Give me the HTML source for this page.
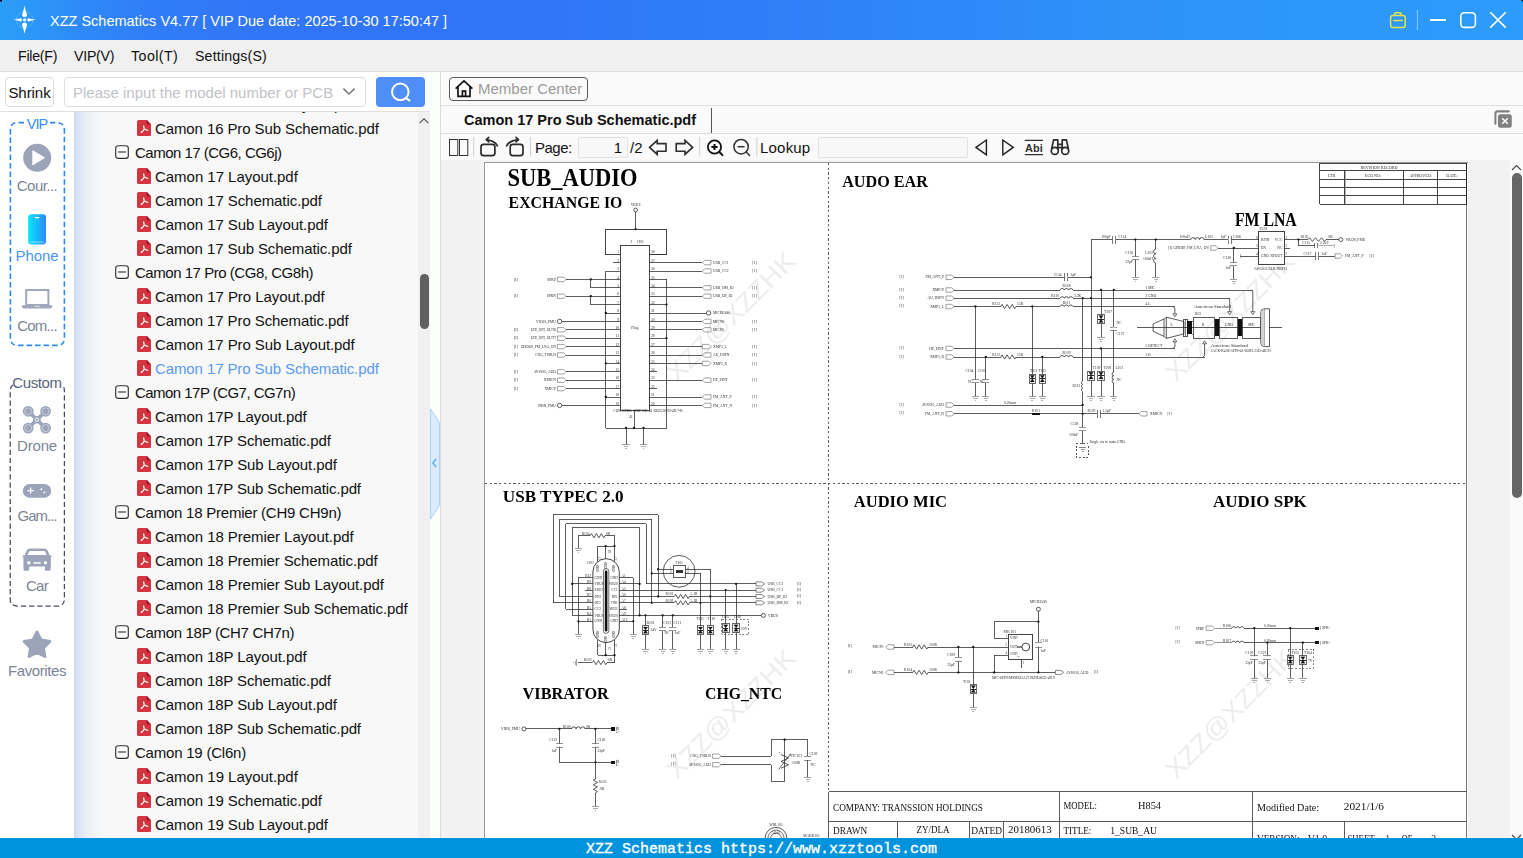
<!DOCTYPE html>
<html lang="en">
<head>
<meta charset="utf-8">
<title>XZZ Schematics V4.77</title>
<style>
*{box-sizing:border-box;margin:0;padding:0}
html,body{width:1523px;height:858px;overflow:hidden;background:#fafafa;font-family:"Liberation Sans","Noto Sans CJK SC",sans-serif;color:#111}
.abs{position:absolute}
#app{position:relative;width:1523px;height:858px;overflow:hidden;background:#fafafa}
/* title bar */
#titlebar{left:0;top:0;width:1523px;height:40px;background:linear-gradient(90deg,#2a9ef8 0px,#2b98f8 30px,#2e89f8 85px,#307df7 150px,#3176f7 250px,#3074f7 480px,#2f80f8 800px,#2d93f9 1150px,#2c9cfa 1523px)}
#titlebar .ttl{left:50px;top:1px;height:40px;line-height:40px;color:#fff;font-size:14.5px;white-space:nowrap}
/* menubar */
#menubar{left:0;top:40px;width:1523px;height:32px;background:#f0f0f0;border-bottom:1px solid #dcdcdc}
#menubar span{position:absolute;top:0;line-height:33.5px;font-size:14.2px;color:#111;white-space:nowrap}
/* left toolbar */
#ltool{left:0;top:72px;width:430px;height:40px;background:#fff;border-bottom:1px solid #e0e0e0}
.btn{border:1px solid #dcdcdc;border-radius:4px;background:#fff}
/* sidebar */
#side{left:0;top:112px;width:74px;height:726px;background:#fff}
.slabel{position:absolute;left:0;width:74px;text-align:center;font-size:15px;color:#7c8598;white-space:nowrap}
/* tree */
#tree{left:74px;top:112px;width:343px;height:726px;background:linear-gradient(90deg,#cbdaf2 0px,#dae4f5 4px,#e7edf7 11px,#f1f4f9 20px,#f7f8f9 30px,#f8f8f8 40px);overflow:hidden}
.row{position:absolute;left:0;height:24px;line-height:25px;font-size:15px;white-space:nowrap;color:#111}
.row.sel{color:#5b9bf5}
/* status bar */
#status{left:0;top:838px;width:1523px;height:20px;background:#0093dd;color:#fff;font-family:"Liberation Mono",monospace;font-size:15px;line-height:24px;text-align:center;white-space:nowrap;-webkit-text-stroke:.35px #fff}
</style>
</head>
<body>
<div id="app">

<!-- TITLE BAR -->
<div id="titlebar" class="abs">

  <svg class="abs" style="left:0;top:0" width="60" height="40" viewBox="0 0 60 40">
    <rect x="0" y="0" width="2" height="1.5" fill="#000"/>
    <circle cx="24.6" cy="19.8" r="8.2" fill="none" stroke="#fff" stroke-opacity=".28" stroke-width="1" stroke-dasharray="3 2.2"/>
    <path d="M24.6 5.6 C25 9 26.6 12.5 27.1 15.2 C27.2 16.3 25.6 17.1 24.6 17.1 C23.6 17.1 22 16.3 22.1 15.2 C22.6 12.5 24.2 9 24.6 5.6Z" fill="#fff"/>
    <path d="M24.6 34 C25 30.6 26.6 27.1 27.1 24.4 C27.2 23.3 25.6 22.5 24.6 22.5 C23.6 22.5 22 23.3 22.1 24.4 C22.6 27.1 24.2 30.6 24.6 34Z" fill="#fff"/>
    <path d="M12.8 19.8 C16 19.5 18.8 18.6 20.6 18.2 C21.5 18.1 21.9 19 21.9 19.8 C21.9 20.6 21.5 21.5 20.6 21.4 C18.8 21 16 20.1 12.8 19.8Z" fill="#fff"/>
    <path d="M36.6 19.8 C33.4 19.5 30.4 18.6 28.6 18.2 C27.7 18.1 27.3 19 27.3 19.8 C27.3 20.6 27.7 21.5 28.6 21.4 C30.4 21 33.4 20.1 36.6 19.8Z" fill="#fff"/>
    <circle cx="24.6" cy="19.8" r="1.6" fill="#fff"/>
  </svg>
  <svg class="abs" style="left:1380px;top:0" width="143" height="40" viewBox="0 0 143 40">
    <rect x="141.5" y="0" width="1.5" height="1.2" fill="#000"/>
    <g fill="none" stroke="#e6e24a" stroke-width="1.5" stroke-linecap="round" stroke-linejoin="round">
      <rect x="10.6" y="15.6" width="14.6" height="11.8" rx="2.2"/>
      <path d="M14.6 15.4 V13.9 Q14.6 12.7 15.8 12.7 H20 Q21.2 12.7 21.2 13.9 V15.4"/>
      <path d="M13.8 20.6 H22.2"/>
    </g>
    <rect x="36.9" y="10" width="1" height="20" fill="#fff" fill-opacity=".45"/>
    <rect x="50" y="19" width="16" height="2" rx=".6" fill="#fff"/>
    <rect x="80.8" y="12.8" width="14.6" height="14.6" rx="3.4" fill="none" stroke="#fff" stroke-width="1.6"/>
    <path d="M110.3 12.2 L125.7 27.6 M125.7 12.2 L110.3 27.6" stroke="#fff" stroke-width="1.6" fill="none"/>
  </svg>
  <div class="abs ttl">XZZ Schematics V4.77 [ VIP Due date: 2025-10-30 17:50:47 ]</div>
</div>

<!-- MENU BAR -->
<div id="menubar" class="abs">
  <span style="left:18px;letter-spacing:-.27px">File(F)</span>
  <span style="left:74px;letter-spacing:-.25px">VIP(V)</span>
  <span style="left:131px;letter-spacing:.45px">Tool(T)</span>
  <span style="left:195px;letter-spacing:.16px">Settings(S)</span>
</div>

<!-- LEFT TOOLBAR -->
<div id="ltool" class="abs">
  <div class="abs btn" style="left:5px;top:5px;width:49px;height:30px;font-size:15px;line-height:30px;text-align:center;color:#111;white-space:nowrap;letter-spacing:-.05px">Shrink</div>
  <div class="abs btn" style="left:64px;top:5px;width:302px;height:30px"></div>
  <div class="abs" style="left:73px;top:6px;height:30px;line-height:30px;font-size:15px;color:#bfc2c8;white-space:nowrap">Please input the model number or PCB</div>
  <svg class="abs" style="left:340px;top:12px" width="18" height="14" viewBox="0 0 18 14"><path d="M3.4 4.6 L9 10 L14.6 4.6" fill="none" stroke="#7a7a7a" stroke-width="1.5"/></svg>
  <div class="abs" style="left:376px;top:5px;width:49px;height:30px;background:#4f8ef7;border-radius:4px"></div>
  <svg class="abs" style="left:376px;top:5px" width="49" height="30" viewBox="0 0 49 30"><circle cx="24.3" cy="14.8" r="8.3" fill="none" stroke="#fff" stroke-width="2"/><path d="M29.6 21.2 L33.4 23.4" stroke="#fff" stroke-width="2" stroke-linecap="round"/></svg>
</div>

<!-- SIDEBAR -->
<div id="side" class="abs">
  <svg class="abs" style="left:0;top:0" width="74" height="726" viewBox="0 112 74 726">
    <!-- VIP dashed box -->
    <path d="M24 122.6 H17.5 Q10.4 122.6 10.4 130 V338 Q10.4 345.4 17.5 345.4 H57 Q64.4 345.4 64.4 338 V130 Q64.4 122.6 57 122.6 H50" fill="none" stroke="#2d8cf0" stroke-width="1.6" stroke-dasharray="5.5 3"/>
    <!-- play -->
    <circle cx="37.2" cy="157.8" r="14" fill="#9ba4b9"/>
    <path d="M32.9 151 L44.2 157.8 L32.9 164.6Z" fill="#fff" stroke="#fff" stroke-width="1.2" stroke-linejoin="round"/>
    <!-- phone -->
    <defs><linearGradient id="pg" x1="0" x2="1" y1="0" y2="0"><stop offset="0" stop-color="#05e6ff"/><stop offset="1" stop-color="#2b8af8"/></linearGradient></defs>
    <rect x="28.2" y="214.2" width="17.8" height="30.2" rx="3.2" fill="url(#pg)"/>
    <rect x="34.8" y="217" width="4.6" height="1.3" rx=".6" fill="#fff"/>
    <rect x="30.2" y="241.6" width="13.8" height="1" fill="#fff" fill-opacity=".55"/>
    <!-- laptop -->
    <rect x="26.2" y="290" width="22.2" height="15" fill="none" stroke="#a0a8bb" stroke-width="2"/>
    <path d="M22 305.2 H52.2 V306.6 Q52.2 308.6 50 308.6 H24.2 Q22 308.6 22 306.6Z" fill="#a0a8bb"/>
    <rect x="34.8" y="305.8" width="4.8" height="1" fill="#fff" fill-opacity=".7"/>
    <!-- Custom dashed box -->
    <path d="M13 385 Q10.2 386.5 10.2 391 V599 Q10.2 606 17.5 606 H57 Q64.4 606 64.4 599 V391 Q64.4 386.5 62 385" fill="none" stroke="#434b5c" stroke-width="1.25" stroke-dasharray="5.2 3"/>
    <!-- drone -->
    <g fill="#9ba4b9">
      <circle cx="28.2" cy="411.3" r="5.4"/><circle cx="45.6" cy="411.3" r="5.4"/><circle cx="28.2" cy="428.1" r="5.4"/><circle cx="45.6" cy="428.1" r="5.4"/>
      <circle cx="36.9" cy="419.7" r="3.8"/>
    </g>
    <path d="M28.2 411.3 L45.6 428.1 M45.6 411.3 L28.2 428.1" stroke="#9ba4b9" stroke-width="3.6" fill="none"/>
    <g fill="none" stroke="#fff" stroke-opacity=".55" stroke-width=".8">
      <circle cx="28.2" cy="411.3" r="3.5"/><circle cx="45.6" cy="411.3" r="3.5"/><circle cx="28.2" cy="428.1" r="3.5"/><circle cx="45.6" cy="428.1" r="3.5"/>
    </g>
    <circle cx="36.9" cy="419.7" r="1.7" fill="none" stroke="#fff" stroke-width=".9"/>
    <!-- gamepad -->
    <rect x="22.8" y="484" width="28.4" height="13.8" rx="6.9" fill="#9ba4b9"/>
    <path d="M27.4 490.6 H33.8 M30.6 487.4 V493.8" stroke="#fff" stroke-width="1.25"/>
    <circle cx="41.4" cy="489.2" r=".95" fill="#fff"/><circle cx="44.4" cy="492.4" r=".95" fill="#fff"/>
    <!-- car -->
    <g fill="#9ba4b9">
      <path d="M29.6 548.4 H44.6 Q46.6 548.4 47.4 550.2 L49.8 555.8 H24.4 L26.8 550.2 Q27.6 548.4 29.6 548.4Z M30 551 Q29.2 551 28.9 551.8 L27.6 555.2 H46.6 L45.3 551.8 Q45 551 44.2 551Z" fill-rule="evenodd"/>
      <rect x="22.6" y="555.4" width="2.6" height="1.9" rx=".6"/><rect x="49" y="555.4" width="2.6" height="1.9" rx=".6"/>
      <path d="M26 555 H48.2 Q50.8 555 50.8 557.6 V566.6 H23.4 V557.6 Q23.4 555 26 555Z"/>
      <rect x="23.6" y="565" width="5.6" height="5.8" rx="1.3"/>
      <rect x="45" y="565" width="5.6" height="5.8" rx="1.3"/>
    </g>
    <circle cx="28.8" cy="562.8" r="1.7" fill="#fff"/><circle cx="45.4" cy="562.8" r="1.7" fill="#fff"/>
    <rect x="33.4" y="562.2" width="7.4" height="1.5" rx=".5" fill="#fff"/>
    <!-- star -->
    <path d="M37.0 632.0 L41.1 640.0 L49.9 641.4 L43.6 647.7 L45.0 656.6 L37.0 652.5 L29.0 656.6 L30.4 647.7 L24.1 641.4 L32.9 640.0Z" fill="#9ba4b9" stroke="#9ba4b9" stroke-width="2.8" stroke-linejoin="round"/>
  </svg>
  <div class="slabel" style="top:4px;color:#3a8ef5;font-size:14.5px;line-height:16px"><span style="background:#fff;padding:0 1px;letter-spacing:-.9px">VIP</span></div>
  <div class="slabel" style="top:64px;line-height:20px;letter-spacing:-0.54px">Cour...</div>
  <div class="slabel" style="top:134px;line-height:20px;color:#4a9af5;letter-spacing:-0.11px">Phone</div>
  <div class="slabel" style="top:204px;line-height:20px;letter-spacing:-0.76px">Com...</div>
  <div class="slabel" style="top:261px;line-height:20px;color:#5a6478;letter-spacing:-0.4px">Custom</div>
  <div class="slabel" style="top:324px;line-height:20px;letter-spacing:-0.17px">Drone</div>
  <div class="slabel" style="top:394px;line-height:20px;letter-spacing:-1.0px">Gam...</div>
  <div class="slabel" style="top:464px;line-height:20px;letter-spacing:-0.7px">Car</div>
  <div class="slabel" style="top:549px;line-height:20px;letter-spacing:-0.4px">Favorites</div>
</div>

<!-- TREE -->
<div id="tree" class="abs">
<svg width="0" height="0" style="position:absolute"><defs>
<g id="pdfi"><path d="M1.6 0 H9.8 L14 4.4 V14.4 Q14 16 12.4 16 H1.6 Q0 16 0 14.4 V1.6 Q0 0 1.6 0Z" fill="#d1353f"/><path d="M9.8 0 L14 4.4 H10.6 Q9.8 4.4 9.8 3.6Z" fill="#a6151d"/><path d="M6.7 5.9 Q6.8 7.8 7.3 9.1 Q5.8 11.4 4.3 12.4 M7.3 9.1 Q9 10.1 10.7 10.4" fill="none" stroke="#fff" stroke-width="1.15" stroke-linecap="round"/><circle cx="4.6" cy="12.1" r=".8" fill="#fff"/></g>
<g id="minus"><rect x=".7" y=".7" width="12.6" height="12.6" rx="2.4" fill="#fdfdfd" stroke="#303030" stroke-width="1.15"/><path d="M3 7 H11" stroke="#303030" stroke-width="1.1"/></g>
</defs></svg>
<svg class="abs" style="left:63px;top:-16px" width="14" height="16"><use href="#pdfi"/></svg>
<div class="row" style="left:81px;top:-20px;letter-spacing:-0.078px">Camon 16 Pro Sub Layout.pdf</div>
<svg class="abs" style="left:63px;top:8px" width="14" height="16"><use href="#pdfi"/></svg>
<div class="row" style="left:81px;top:4px;letter-spacing:-0.103px">Camon 16 Pro Sub Schematic.pdf</div>
<svg class="abs" style="left:41px;top:33px" width="14" height="14"><use href="#minus"/></svg>
<div class="row" style="left:61px;top:28px;letter-spacing:-0.511px">Camon 17 (CG6, CG6j)</div>
<svg class="abs" style="left:63px;top:56px" width="14" height="16"><use href="#pdfi"/></svg>
<div class="row" style="left:81px;top:52px;letter-spacing:-0.034px">Camon 17 Layout.pdf</div>
<svg class="abs" style="left:63px;top:80px" width="14" height="16"><use href="#pdfi"/></svg>
<div class="row" style="left:81px;top:76px;letter-spacing:-0.069px">Camon 17 Schematic.pdf</div>
<svg class="abs" style="left:63px;top:104px" width="14" height="16"><use href="#pdfi"/></svg>
<div class="row" style="left:81px;top:100px;letter-spacing:-0.065px">Camon 17 Sub Layout.pdf</div>
<svg class="abs" style="left:63px;top:128px" width="14" height="16"><use href="#pdfi"/></svg>
<div class="row" style="left:81px;top:124px;letter-spacing:-0.099px">Camon 17 Sub Schematic.pdf</div>
<svg class="abs" style="left:41px;top:153px" width="14" height="14"><use href="#minus"/></svg>
<div class="row" style="left:61px;top:148px;letter-spacing:-0.465px">Camon 17 Pro (CG8, CG8h)</div>
<svg class="abs" style="left:63px;top:176px" width="14" height="16"><use href="#pdfi"/></svg>
<div class="row" style="left:81px;top:172px;letter-spacing:-0.054px">Camon 17 Pro Layout.pdf</div>
<svg class="abs" style="left:63px;top:200px" width="14" height="16"><use href="#pdfi"/></svg>
<div class="row" style="left:81px;top:196px;letter-spacing:-0.086px">Camon 17 Pro Schematic.pdf</div>
<svg class="abs" style="left:63px;top:224px" width="14" height="16"><use href="#pdfi"/></svg>
<div class="row" style="left:81px;top:220px;letter-spacing:-0.078px">Camon 17 Pro Sub Layout.pdf</div>
<svg class="abs" style="left:63px;top:248px" width="14" height="16"><use href="#pdfi"/></svg>
<div class="row sel" style="left:81px;top:244px;letter-spacing:-0.103px">Camon 17 Pro Sub Schematic.pdf</div>
<svg class="abs" style="left:41px;top:273px" width="14" height="14"><use href="#minus"/></svg>
<div class="row" style="left:61px;top:268px;letter-spacing:-0.537px">Camon 17P (CG7, CG7n)</div>
<svg class="abs" style="left:63px;top:296px" width="14" height="16"><use href="#pdfi"/></svg>
<div class="row" style="left:81px;top:292px;letter-spacing:-0.084px">Camon 17P Layout.pdf</div>
<svg class="abs" style="left:63px;top:320px" width="14" height="16"><use href="#pdfi"/></svg>
<div class="row" style="left:81px;top:316px;letter-spacing:-0.107px">Camon 17P Schematic.pdf</div>
<svg class="abs" style="left:63px;top:344px" width="14" height="16"><use href="#pdfi"/></svg>
<div class="row" style="left:81px;top:340px;letter-spacing:-0.093px">Camon 17P Sub Layout.pdf</div>
<svg class="abs" style="left:63px;top:368px" width="14" height="16"><use href="#pdfi"/></svg>
<div class="row" style="left:81px;top:364px;letter-spacing:-0.115px">Camon 17P Sub Schematic.pdf</div>
<svg class="abs" style="left:41px;top:393px" width="14" height="14"><use href="#minus"/></svg>
<div class="row" style="left:61px;top:388px;letter-spacing:-0.233px">Camon 18 Premier (CH9 CH9n)</div>
<svg class="abs" style="left:63px;top:416px" width="14" height="16"><use href="#pdfi"/></svg>
<div class="row" style="left:81px;top:412px;letter-spacing:-0.056px">Camon 18 Premier Layout.pdf</div>
<svg class="abs" style="left:63px;top:440px" width="14" height="16"><use href="#pdfi"/></svg>
<div class="row" style="left:81px;top:436px;letter-spacing:-0.080px">Camon 18 Premier Schematic.pdf</div>
<svg class="abs" style="left:63px;top:464px" width="14" height="16"><use href="#pdfi"/></svg>
<div class="row" style="left:81px;top:460px;letter-spacing:-0.070px">Camon 18 Premier Sub Layout.pdf</div>
<svg class="abs" style="left:63px;top:488px" width="14" height="16"><use href="#pdfi"/></svg>
<div class="row" style="left:81px;top:484px;letter-spacing:-0.099px">Camon 18 Premier Sub Schematic.pdf</div>
<svg class="abs" style="left:41px;top:513px" width="14" height="14"><use href="#minus"/></svg>
<div class="row" style="left:61px;top:508px;letter-spacing:-0.321px">Camon 18P (CH7 CH7n)</div>
<svg class="abs" style="left:63px;top:536px" width="14" height="16"><use href="#pdfi"/></svg>
<div class="row" style="left:81px;top:532px;letter-spacing:-0.084px">Camon 18P Layout.pdf</div>
<svg class="abs" style="left:63px;top:560px" width="14" height="16"><use href="#pdfi"/></svg>
<div class="row" style="left:81px;top:556px;letter-spacing:-0.107px">Camon 18P Schematic.pdf</div>
<svg class="abs" style="left:63px;top:584px" width="14" height="16"><use href="#pdfi"/></svg>
<div class="row" style="left:81px;top:580px;letter-spacing:-0.093px">Camon 18P Sub Layout.pdf</div>
<svg class="abs" style="left:63px;top:608px" width="14" height="16"><use href="#pdfi"/></svg>
<div class="row" style="left:81px;top:604px;letter-spacing:-0.115px">Camon 18P Sub Schematic.pdf</div>
<svg class="abs" style="left:41px;top:633px" width="14" height="14"><use href="#minus"/></svg>
<div class="row" style="left:61px;top:628px;letter-spacing:-0.215px">Camon 19 (Cl6n)</div>
<svg class="abs" style="left:63px;top:656px" width="14" height="16"><use href="#pdfi"/></svg>
<div class="row" style="left:81px;top:652px;letter-spacing:-0.034px">Camon 19 Layout.pdf</div>
<svg class="abs" style="left:63px;top:680px" width="14" height="16"><use href="#pdfi"/></svg>
<div class="row" style="left:81px;top:676px;letter-spacing:-0.069px">Camon 19 Schematic.pdf</div>
<svg class="abs" style="left:63px;top:704px" width="14" height="16"><use href="#pdfi"/></svg>
<div class="row" style="left:81px;top:700px;letter-spacing:-0.065px">Camon 19 Sub Layout.pdf</div>
</div>
<div id="tscroll" class="abs" style="left:418px;top:112px;width:13px;height:726px;background:#f0f0f0;border-right:1px solid #dadada">
  <svg class="abs" style="left:0;top:0" width="12" height="20" viewBox="0 0 12 20"><path d="M1.6 11.2 L6 6.8 L10.4 11.2" fill="none" stroke="#555" stroke-width="1.1"/></svg>
  <div class="abs" style="left:2px;top:162px;width:9px;height:55px;border-radius:4.5px;background:#606060"></div>
</div>

<!-- RIGHT PANEL -->
<div id="right" class="abs" style="left:430px;top:72px;width:1093px;height:766px">
  <!-- splitter -->
  <div class="abs" style="left:0;top:0;width:10px;height:766px;background:#fbfefb"></div>
  <div class="abs" style="left:10px;top:0;width:1px;height:766px;background:#dcdcdc"></div>
  <svg class="abs" style="left:0;top:330px" width="11" height="124" viewBox="0 0 11 124"><path d="M0.5 7 L8 18 Q9.5 20 9.5 23 V101 Q9.5 104 8 106 L0.5 117Z" fill="#dbeafd" stroke="#a9d2fb" stroke-width="1"/><path d="M6.2 57 L2.8 61 L6.2 65" fill="none" stroke="#56a4f5" stroke-width="1.2"/></svg>
  <!-- member center -->
  <div class="abs" style="left:19px;top:5px;width:139px;height:24px;border:1px solid #5a5a5a;border-radius:4px;background:#fafafa"></div>
  <svg class="abs" style="left:24px;top:7px" width="20" height="20" viewBox="0 0 20 20"><path d="M1.6 9.6 L10 1.8 L18.4 9.6 M4 8 V17.4 H16 V8 M8.4 17.4 V12.2 H11.6 V17.4" fill="none" stroke="#111" stroke-width="1.7" stroke-linejoin="miter"/></svg>
  <div class="abs" style="left:48px;top:5px;height:24px;line-height:24px;font-size:15px;color:#9a9a9a;white-space:nowrap">Member Center</div>
  <div class="abs" style="left:11px;top:33px;width:1082px;height:1px;background:#dedede"></div>
  <!-- tab row -->
  <div class="abs" style="left:34px;top:35px;height:27px;line-height:27px;font-size:14.5px;font-weight:700;color:#111;white-space:nowrap">Camon 17 Pro Sub Schematic.pdf</div>
  <div class="abs" style="left:281px;top:36px;width:1px;height:25px;background:#555"></div>
  <svg class="abs" style="left:1063px;top:37px" width="20" height="20" viewBox="0 0 20 20"><path d="M2.4 14.8 V4.4 Q2.4 2.4 4.4 2.4 H15.8" fill="none" stroke="#808080" stroke-width="2.1" stroke-linecap="round"/><rect x="5" y="5.2" width="13.8" height="13.6" rx="2.2" fill="#808080"/><path d="M9.2 9.2 L14.8 14.8 M14.8 9.2 L9.2 14.8" stroke="#fff" stroke-width="1.4"/></svg>
  <div class="abs" style="left:11px;top:61px;width:1082px;height:1px;background:#dedede"></div>
  <!-- pdf toolbar -->
  <div id="ptool" class="abs" style="left:11px;top:62px;width:1082px;height:26px">
    <svg class="abs" style="left:0;top:0" width="1082" height="26" viewBox="441 134 1082 26">
      <g fill="none" stroke="#333" stroke-width="1">
        <rect x="449.5" y="139.5" width="8.3" height="16"/><rect x="459.5" y="139.5" width="8.3" height="16"/>
      </g>
      <g fill="#cfcfcf"><rect x="473.2" y="137" width="1" height="19.5"/><rect x="530" y="137" width="1" height="19.5"/><rect x="699.2" y="137" width="1" height="19.5"/><rect x="756.4" y="137" width="1" height="19.5"/></g>
      <!-- rotate left -->
      <g fill="none" stroke="#2a2a2a" stroke-width="1.7" stroke-linecap="round" stroke-linejoin="round">
        <rect x="481" y="144.3" width="13.9" height="11.3" rx="2.6"/>
        <path d="M497.4 145.8 Q494.4 140.4 487.2 139.8"/><path d="M488.8 137.4 L486.3 139.7 L488.8 141.9"/>
        <rect x="510.2" y="144.3" width="12.8" height="11.3" rx="2.6"/>
        <path d="M506.6 145.8 Q509.6 140.4 517.4 139.8"/><path d="M516 137.4 L518.5 139.7 L516 141.9"/>
      </g>
      <!-- page arrows -->
      <g fill="none" stroke="#2e2e2e" stroke-width="1.6" stroke-linejoin="miter">
        <path d="M649.6 147.4 L657.2 140.4 V143.6 H666 V151.2 H657.2 V154.4Z"/>
        <path d="M692.6 147.4 L685 140.4 V143.6 H676.2 V151.2 H685 V154.4Z"/>
      </g>
      <!-- zoom in -->
      <circle cx="714.5" cy="147" r="6.6" fill="none" stroke="#111" stroke-width="1.8"/>
      <path d="M719.4 152 L722.4 155.2" stroke="#111" stroke-width="1.9" stroke-linecap="round"/>
      <path d="M711.4 147 H717.6 M714.5 143.9 V150.1" stroke="#111" stroke-width="2"/>
      <!-- zoom out -->
      <circle cx="741.1" cy="146.7" r="7.2" fill="none" stroke="#333" stroke-width="1.5"/>
      <path d="M746.3 151.9 L749.6 155.4" stroke="#333" stroke-width="1.5" stroke-linecap="round"/>
      <path d="M737.6 146.7 H744.6" stroke="#333" stroke-width="1.5"/>
      <!-- prev/next -->
      <g fill="none" stroke="#222" stroke-width="1.4" stroke-linejoin="miter">
        <path d="M976 147.4 L986.4 140 V154.8Z"/><path d="M1013.2 147.4 L1002.8 140 V154.8Z"/>
      </g>
      <!-- Abi -->
      <path d="M1024.8 140.4 H1043 M1024.8 154.6 H1043" stroke="#333" stroke-width="1.2"/>
      <text x="1033.9" y="151.6" text-anchor="middle" font-family="Liberation Sans, sans-serif" font-weight="700" font-size="11.8" fill="#333" textLength="17.6" lengthAdjust="spacingAndGlyphs">Abi</text>
      <!-- binoculars -->
      <g fill="none" stroke="#2a2a2a" stroke-width="1.7" stroke-linejoin="round">
        <circle cx="1054.8" cy="150.9" r="3.5"/><circle cx="1065.2" cy="150.9" r="3.5"/>
        <path d="M1051.5 149.4 L1053.6 139.9 H1057.8 V149.4 M1068.5 149.4 L1066.4 139.9 H1062.2 V149.4 M1057.8 144.4 H1062.2 M1057.8 147.6 H1062.2"/>
      </g>
    </svg>
    <div class="abs" style="left:94px;top:0;height:26px;line-height:27px;font-size:15px;color:#111;white-space:nowrap;letter-spacing:-.5px">Page:</div>
    <div class="abs" style="left:137px;top:2.5px;width:50px;height:21.5px;border:1px solid #e2e2e2;background:#f8f8f8;border-radius:2px"></div>
    <div class="abs" style="left:137px;top:0;width:44px;height:26px;line-height:27px;font-size:15px;text-align:right;color:#111">1</div>
    <div class="abs" style="left:189px;top:0;height:26px;line-height:27px;font-size:15px;color:#111;white-space:nowrap">/2</div>
    <div class="abs" style="left:319px;top:0;height:26px;line-height:27px;font-size:15px;color:#111;white-space:nowrap;letter-spacing:.2px">Lookup</div>
    <div class="abs" style="left:377px;top:2.5px;width:150px;height:21.5px;border:1px solid #e2e2e2;background:#f8f8f8;border-radius:2px"></div>
  </div>
  <!-- pdf area -->
  <div class="abs" style="left:11px;top:88px;width:1069px;height:678px;background:#f2f2f2"></div>
  <!-- v scrollbar -->
  <div class="abs" style="left:1080px;top:88px;width:13px;height:678px;background:#fafafa">
    <svg class="abs" style="left:0;top:0" width="13" height="14" viewBox="0 0 13 14"><path d="M2 10 L6.5 5.6 L11 10" fill="none" stroke="#444" stroke-width="1.1"/></svg>
    <div class="abs" style="left:1.5px;top:12.6px;width:10px;height:325px;border-radius:5px;background:#666"></div>
    <svg class="abs" style="left:0;top:671px" width="13" height="14" viewBox="0 0 13 14"><path d="M2 4 L6.5 8.4 L11 4" fill="none" stroke="#444" stroke-width="1.1"/></svg>
  </div>
  <!-- page -->
  <div id="page" class="abs" style="left:54px;top:90px;width:984px;height:676px;background:#fff;border-left:1px solid #999;border-top:1px solid #999;overflow:hidden"><svg class="abs" style="left:0;top:0;will-change:transform" width="982" height="675" viewBox="485 163 982 675" font-family="Liberation Serif, serif" fill="none" stroke="#303030" stroke-width=".78"><style>.c{shape-rendering:crispEdges}</style>
<text stroke="none" x="737" y="323" font-size="25.5" font-family="Liberation Sans, sans-serif" text-anchor="middle" fill="#ededed" transform="rotate(-45 737 323)" textLength="170" lengthAdjust="spacingAndGlyphs">XZZ@XZZHK</text>
<text stroke="none" x="1236" y="323" font-size="25.5" font-family="Liberation Sans, sans-serif" text-anchor="middle" fill="#ededed" transform="rotate(-45 1236 323)" textLength="170" lengthAdjust="spacingAndGlyphs">XZZ@XZZHK</text>
<text stroke="none" x="737" y="720" font-size="25.5" font-family="Liberation Sans, sans-serif" text-anchor="middle" fill="#ededed" transform="rotate(-45 737 720)" textLength="170" lengthAdjust="spacingAndGlyphs">XZZ@XZZHK</text>
<text stroke="none" x="1236" y="720" font-size="25.5" font-family="Liberation Sans, sans-serif" text-anchor="middle" fill="#ededed" transform="rotate(-45 1236 720)" textLength="170" lengthAdjust="spacingAndGlyphs">XZZ@XZZHK</text>
<!--WM-->
<path class="c" d="M828.6 163V791M485 483.5H1467" stroke="#4a4a4a" stroke-width=".9" stroke-dasharray="2.3 2.4"/>
<path d="M1466.4 163L1466.4 838" stroke="#777" stroke-width="1" class="c"/>
<path d="M1319.6 163.4L1467 163.4" stroke-width="0.9" class="c"/>
<path d="M1319.6 170.6L1467 170.6" stroke-width="0.9" class="c"/>
<path d="M1319.6 179.2L1467 179.2" stroke-width="0.9" class="c"/>
<path d="M1319.6 187.6L1467 187.6" stroke-width="0.9" class="c"/>
<path d="M1319.6 195.9L1467 195.9" stroke-width="0.9" class="c"/>
<path d="M1319.6 204.2L1467 204.2" stroke-width="0.9" class="c"/>
<path d="M1319.6 163L1319.6 204.2" stroke-width="0.9" class="c"/>
<path d="M1466.4 163L1466.4 204.2" stroke="#222" stroke-width="1" class="c"/>
<path d="M1344.6 170.6L1344.6 204.2" stroke-width="0.9" class="c"/>
<path d="M1403.5 170.6L1403.5 204.2" stroke-width="0.9" class="c"/>
<path d="M1437.7 170.6L1437.7 204.2" stroke-width="0.9" class="c"/>
<path d="M1345.6 170.6L1345.6 204.2" stroke="#888" stroke-width="0.6" class="c"/>
<text fill="#2e2e2e" stroke="none" x="1379" y="168.6" font-size="4.15" text-anchor="middle">REVISION RECORD</text>
<text fill="#2e2e2e" stroke="none" x="1331.5" y="177" font-size="4.03" text-anchor="middle">LTR</text>
<text fill="#2e2e2e" stroke="none" x="1373" y="177" font-size="4.03" text-anchor="middle">ECO NO:</text>
<text fill="#2e2e2e" stroke="none" x="1420.5" y="177" font-size="4.03" text-anchor="middle">APPROVED:</text>
<text fill="#2e2e2e" stroke="none" x="1452" y="177" font-size="4.03" text-anchor="middle">DATE:</text>
<text stroke="none" x="507.4" y="185.9" font-size="24.6" font-weight="700" fill="#000" textLength="130" lengthAdjust="spacingAndGlyphs">SUB_AUDIO</text>
<text stroke="none" x="508.6" y="207.9" font-size="17.5" font-weight="700" fill="#000" textLength="113.8" lengthAdjust="spacingAndGlyphs">EXCHANGE IO</text>
<text stroke="none" x="842.2" y="187.3" font-size="17.4" font-weight="700" fill="#000" textLength="85.8" lengthAdjust="spacingAndGlyphs">AUDO EAR</text>
<text stroke="none" x="1235" y="226.1" font-size="17.8" font-weight="700" fill="#000" textLength="61.6" lengthAdjust="spacingAndGlyphs">FM LNA</text>
<text stroke="none" x="502.8" y="502.3" font-size="17" font-weight="700" fill="#000" textLength="120.8" lengthAdjust="spacingAndGlyphs">USB TYPEC 2.0</text>
<text stroke="none" x="853.8" y="506.7" font-size="17" font-weight="700" fill="#000" textLength="93.2" lengthAdjust="spacingAndGlyphs">AUDIO MIC</text>
<text stroke="none" x="1213" y="507.3" font-size="17" font-weight="700" fill="#000" textLength="93.8" lengthAdjust="spacingAndGlyphs">AUDIO SPK</text>
<text stroke="none" x="522.6" y="699.1" font-size="17" font-weight="700" fill="#000" textLength="86.2" lengthAdjust="spacingAndGlyphs">VIBRATOR</text>
<text stroke="none" x="705" y="699.1" font-size="17" font-weight="700" fill="#000" textLength="77.2" lengthAdjust="spacingAndGlyphs">CHG_NTC</text>
<text fill="#2e2e2e" stroke="none" x="635.6" y="206.4" font-size="3.66" text-anchor="middle">VBUS</text>
<circle cx="635.6" cy="210" r="1.9" fill="#fff"/>
<path d="M635.6 212L635.6 229.2" class="c"/>
<circle cx="635.6" cy="229.2" r="1.15" fill="#111" stroke="none"/>
<rect x="605.8" y="229.2" width="60.7" height="25" stroke-width="0.9" class="c"/>
<rect x="620.4" y="245.4" width="28.8" height="164.6" fill="#fff" stroke-width="0.9" class="c"/>
<text fill="#2e2e2e" stroke="none" x="637" y="243.4" font-size="3.66">J101</text>
<text fill="#2e2e2e" stroke="none" x="630.5" y="243.4" font-size="3.66">J</text>
<text fill="#2e2e2e" stroke="none" x="619" y="253.4" font-size="3.66" text-anchor="end">1</text>
<text fill="#2e2e2e" stroke="none" x="619" y="261.8" font-size="3.66" text-anchor="end">2</text>
<text fill="#2e2e2e" stroke="none" x="619" y="270.2" font-size="3.66" text-anchor="end">3</text>
<text fill="#2e2e2e" stroke="none" x="619" y="278.6" font-size="3.66" text-anchor="end">4</text>
<text fill="#2e2e2e" stroke="none" x="619" y="287" font-size="3.66" text-anchor="end">5</text>
<text fill="#2e2e2e" stroke="none" x="619" y="295.4" font-size="3.66" text-anchor="end">6</text>
<text fill="#2e2e2e" stroke="none" x="619" y="303.8" font-size="3.66" text-anchor="end">7</text>
<text fill="#2e2e2e" stroke="none" x="619" y="312.2" font-size="3.66" text-anchor="end">8</text>
<text fill="#2e2e2e" stroke="none" x="619" y="320.6" font-size="3.66" text-anchor="end">9</text>
<text fill="#2e2e2e" stroke="none" x="619" y="329" font-size="3.66" text-anchor="end">10</text>
<text fill="#2e2e2e" stroke="none" x="619" y="337.4" font-size="3.66" text-anchor="end">11</text>
<text fill="#2e2e2e" stroke="none" x="619" y="345.8" font-size="3.66" text-anchor="end">12</text>
<text fill="#2e2e2e" stroke="none" x="619" y="354.2" font-size="3.66" text-anchor="end">13</text>
<text fill="#2e2e2e" stroke="none" x="619" y="362.6" font-size="3.66" text-anchor="end">14</text>
<text fill="#2e2e2e" stroke="none" x="619" y="371" font-size="3.66" text-anchor="end">15</text>
<text fill="#2e2e2e" stroke="none" x="619" y="379.4" font-size="3.66" text-anchor="end">16</text>
<text fill="#2e2e2e" stroke="none" x="619" y="387.8" font-size="3.66" text-anchor="end">17</text>
<text fill="#2e2e2e" stroke="none" x="619" y="396.2" font-size="3.66" text-anchor="end">18</text>
<text fill="#2e2e2e" stroke="none" x="619" y="404.6" font-size="3.66" text-anchor="end">19</text>
<text fill="#2e2e2e" stroke="none" x="651" y="404.6" font-size="3.66">20</text>
<text fill="#2e2e2e" stroke="none" x="651" y="396.2" font-size="3.66">21</text>
<text fill="#2e2e2e" stroke="none" x="651" y="387.8" font-size="3.66">22</text>
<text fill="#2e2e2e" stroke="none" x="651" y="379.4" font-size="3.66">23</text>
<text fill="#2e2e2e" stroke="none" x="651" y="371" font-size="3.66">24</text>
<text fill="#2e2e2e" stroke="none" x="651" y="362.6" font-size="3.66">25</text>
<text fill="#2e2e2e" stroke="none" x="651" y="354.2" font-size="3.66">26</text>
<text fill="#2e2e2e" stroke="none" x="651" y="345.8" font-size="3.66">27</text>
<text fill="#2e2e2e" stroke="none" x="651" y="337.4" font-size="3.66">28</text>
<text fill="#2e2e2e" stroke="none" x="651" y="329" font-size="3.66">29</text>
<text fill="#2e2e2e" stroke="none" x="651" y="320.6" font-size="3.66">30</text>
<text fill="#2e2e2e" stroke="none" x="651" y="312.2" font-size="3.66">31</text>
<text fill="#2e2e2e" stroke="none" x="651" y="303.8" font-size="3.66">32</text>
<text fill="#2e2e2e" stroke="none" x="651" y="295.4" font-size="3.66">33</text>
<text fill="#2e2e2e" stroke="none" x="651" y="287" font-size="3.66">34</text>
<text fill="#2e2e2e" stroke="none" x="651" y="278.6" font-size="3.66">35</text>
<text fill="#2e2e2e" stroke="none" x="651" y="270.2" font-size="3.66">36</text>
<text fill="#2e2e2e" stroke="none" x="651" y="261.8" font-size="3.66">37</text>
<text fill="#2e2e2e" stroke="none" x="651" y="253.4" font-size="3.66">38</text>
<text fill="#2e2e2e" stroke="none" x="634.8" y="329" font-size="3.9" text-anchor="middle">Plug</text>
<text fill="#2e2e2e" stroke="none" x="648" y="411.6" font-size="3.66" text-anchor="middle">CON-BTBR-38RF-OK-41 R82G38-93-4H.7-R</text>
<path d="M605.8 271L605.8 428" class="c"/>
<path d="M666.5 279.4L666.5 428" class="c"/>
<path d="M605.8 428L666.5 428" class="c"/>
<path d="M634 410L634 428" class="c"/>
<circle cx="634" cy="428" r="1.15" fill="#111" stroke="none"/>
<text fill="#2e2e2e" stroke="none" x="632.6" y="418" font-size="3.42" text-anchor="end">41</text>
<circle cx="626" cy="428" r="1.15" fill="#111" stroke="none"/>
<path d="M626 428L626 444.6" class="c"/>
<path d="M622.4 444.6L629.6 444.6" stroke="#8a8a8a" stroke-width="0.8" class="c"/>
<path d="M623.8 446.7L628.2 446.7" stroke="#8a8a8a" stroke-width="0.7" class="c"/>
<path d="M625.1 448.8L626.9 448.8" stroke="#8a8a8a" stroke-width="0.7" class="c"/>
<circle cx="643.5" cy="428" r="1.15" fill="#111" stroke="none"/>
<path d="M643.5 428L643.5 444.6" class="c"/>
<path d="M639.9 444.6L647.1 444.6" stroke="#8a8a8a" stroke-width="0.8" class="c"/>
<path d="M641.3 446.7L645.7 446.7" stroke="#8a8a8a" stroke-width="0.7" class="c"/>
<path d="M642.6 448.8L644.4 448.8" stroke="#8a8a8a" stroke-width="0.7" class="c"/>
<path d="M613 262.6L620.4 262.6" class="c"/>
<path d="M605.8 271L620.4 271" class="c"/>
<path d="M605.8 313L620.4 313" class="c"/>
<circle cx="605.8" cy="313" r="1.15" fill="#111" stroke="none"/>
<path d="M605.8 363.4L620.4 363.4" class="c"/>
<circle cx="605.8" cy="363.4" r="1.15" fill="#111" stroke="none"/>
<path d="M605.8 397L620.4 397" class="c"/>
<circle cx="605.8" cy="397" r="1.15" fill="#111" stroke="none"/>
<path d="M557.4 277.2L563.8 277.2L566 279.4L563.8 281.6L557.4 281.6Z" stroke="#7a7a7a" stroke-width="0.7"/>
<path d="M566 279.4L620.4 279.4" class="c"/>
<text fill="#2e2e2e" stroke="none" x="556" y="280.5" font-size="3.66" text-anchor="end">SPKP</text>
<text fill="#2e2e2e" stroke="none" x="515.8" y="280.5" font-size="3.66" text-anchor="middle">[1]</text>
<circle cx="590.8" cy="279.4" r="1.15" fill="#111" stroke="none"/>
<path d="M590.8 279.4L590.8 287.8L620.4 287.8" class="c"/>
<path d="M557.4 294L563.8 294L566 296.2L563.8 298.4L557.4 298.4Z" stroke="#7a7a7a" stroke-width="0.7"/>
<path d="M566 296.2L620.4 296.2" class="c"/>
<text fill="#2e2e2e" stroke="none" x="556" y="297.3" font-size="3.66" text-anchor="end">SPKN</text>
<text fill="#2e2e2e" stroke="none" x="515.8" y="297.3" font-size="3.66" text-anchor="middle">[1]</text>
<circle cx="590.8" cy="296.2" r="1.15" fill="#111" stroke="none"/>
<path d="M590.8 296.2L590.8 304.6L620.4 304.6" class="c"/>
<circle cx="559.6" cy="321.4" r="2.2" fill="#fff"/>
<path d="M561.8 321.4L620.4 321.4" class="c"/>
<text fill="#2e2e2e" stroke="none" x="556" y="322.5" font-size="3.66" text-anchor="end">VIO28_PMU</text>
<path d="M557.4 327.6L563.8 327.6L566 329.8L563.8 332L557.4 332Z" stroke="#7a7a7a" stroke-width="0.7"/>
<path d="M566 329.8L620.4 329.8" class="c"/>
<text fill="#2e2e2e" stroke="none" x="556" y="330.9" font-size="3.66" text-anchor="end">LTE_RFI_OUT6</text>
<text fill="#2e2e2e" stroke="none" x="515.8" y="330.9" font-size="3.66" text-anchor="middle">[2]</text>
<path d="M557.4 336L563.8 336L566 338.2L563.8 340.4L557.4 340.4Z" stroke="#7a7a7a" stroke-width="0.7"/>
<path d="M566 338.2L620.4 338.2" class="c"/>
<text fill="#2e2e2e" stroke="none" x="556" y="339.3" font-size="3.66" text-anchor="end">LTE_RFI_OUT7</text>
<text fill="#2e2e2e" stroke="none" x="515.8" y="339.3" font-size="3.66" text-anchor="middle">[2]</text>
<path d="M557.4 344.4L563.8 344.4L566 346.6L563.8 348.8L557.4 348.8Z" stroke="#7a7a7a" stroke-width="0.7"/>
<path d="M566 346.6L620.4 346.6" class="c"/>
<text fill="#2e2e2e" stroke="none" x="556" y="347.7" font-size="3.66" text-anchor="end">GPIO69_FM_LNA_EN</text>
<text fill="#2e2e2e" stroke="none" x="515.8" y="347.7" font-size="3.66" text-anchor="middle">[1]</text>
<path d="M557.4 352.8L563.8 352.8L566 355L563.8 357.2L557.4 357.2Z" stroke="#7a7a7a" stroke-width="0.7"/>
<path d="M566 355L620.4 355" class="c"/>
<text fill="#2e2e2e" stroke="none" x="556" y="356.1" font-size="3.66" text-anchor="end">CHG_TSBUS</text>
<text fill="#2e2e2e" stroke="none" x="515.8" y="356.1" font-size="3.66" text-anchor="middle">[1]</text>
<path d="M557.4 369.6L563.8 369.6L566 371.8L563.8 374L557.4 374Z" stroke="#7a7a7a" stroke-width="0.7"/>
<path d="M566 371.8L620.4 371.8" class="c"/>
<text fill="#2e2e2e" stroke="none" x="556" y="372.9" font-size="3.66" text-anchor="end">AVSS30_AUD</text>
<text fill="#2e2e2e" stroke="none" x="515.8" y="372.9" font-size="3.66" text-anchor="middle">[1]</text>
<path d="M557.4 378L563.8 378L566 380.2L563.8 382.4L557.4 382.4Z" stroke="#7a7a7a" stroke-width="0.7"/>
<path d="M566 380.2L620.4 380.2" class="c"/>
<text fill="#2e2e2e" stroke="none" x="556" y="381.3" font-size="3.66" text-anchor="end">XMICN</text>
<text fill="#2e2e2e" stroke="none" x="515.8" y="381.3" font-size="3.66" text-anchor="middle">[1]</text>
<path d="M557.4 386.4L563.8 386.4L566 388.6L563.8 390.8L557.4 390.8Z" stroke="#7a7a7a" stroke-width="0.7"/>
<path d="M566 388.6L620.4 388.6" class="c"/>
<text fill="#2e2e2e" stroke="none" x="556" y="389.7" font-size="3.66" text-anchor="end">XMICP</text>
<text fill="#2e2e2e" stroke="none" x="515.8" y="389.7" font-size="3.66" text-anchor="middle">[1]</text>
<circle cx="559.6" cy="405.4" r="2.2" fill="#fff"/>
<path d="M561.8 405.4L620.4 405.4" class="c"/>
<text fill="#2e2e2e" stroke="none" x="556" y="406.5" font-size="3.66" text-anchor="end">VIBR_PMU</text>
<path d="M649.2 254.2L666.5 254.2" class="c"/>
<path d="M649.2 262.6L702.4 262.6" class="c"/>
<path d="M711 260.4L704.6 260.4L702.4 262.6L704.6 264.8L711 264.8Z" stroke="#7a7a7a" stroke-width="0.7"/>
<text fill="#2e2e2e" stroke="none" x="713" y="263.7" font-size="3.66">USB_CC1</text>
<text fill="#2e2e2e" stroke="none" x="754.5" y="263.7" font-size="3.66" text-anchor="middle">[1]</text>
<path d="M649.2 271L702.4 271" class="c"/>
<path d="M711 268.8L704.6 268.8L702.4 271L704.6 273.2L711 273.2Z" stroke="#7a7a7a" stroke-width="0.7"/>
<text fill="#2e2e2e" stroke="none" x="713" y="272.1" font-size="3.66">USB_CC2</text>
<text fill="#2e2e2e" stroke="none" x="754.5" y="272.1" font-size="3.66" text-anchor="middle">[1]</text>
<path d="M649.2 279.4L666.5 279.4" class="c"/>
<path d="M649.2 287.8L702.4 287.8" class="c"/>
<path d="M711 285.6L704.6 285.6L702.4 287.8L704.6 290L711 290Z" stroke="#7a7a7a" stroke-width="0.7"/>
<text fill="#2e2e2e" stroke="none" x="713" y="288.9" font-size="3.66">USB_DM_IO</text>
<text fill="#2e2e2e" stroke="none" x="754.5" y="288.9" font-size="3.66" text-anchor="middle">[1]</text>
<path d="M649.2 296.2L702.4 296.2" class="c"/>
<path d="M711 294L704.6 294L702.4 296.2L704.6 298.4L711 298.4Z" stroke="#7a7a7a" stroke-width="0.7"/>
<text fill="#2e2e2e" stroke="none" x="713" y="297.3" font-size="3.66">USB_DP_IO</text>
<text fill="#2e2e2e" stroke="none" x="754.5" y="297.3" font-size="3.66" text-anchor="middle">[1]</text>
<path d="M649.2 304.6L666.5 304.6" class="c"/>
<path d="M649.2 338.2L666.5 338.2" class="c"/>
<path d="M649.2 388.6L657 388.6" class="c"/>
<circle cx="666.5" cy="304.6" r="1.15" fill="#111" stroke="none"/>
<circle cx="666.5" cy="338.2" r="1.15" fill="#111" stroke="none"/>
<path d="M649.2 313L706.4 313" class="c"/>
<circle cx="708.6" cy="313" r="2.2" fill="#fff"/>
<text fill="#2e2e2e" stroke="none" x="713" y="314.1" font-size="3.66">MICBIAS0</text>
<path d="M649.2 321.4L702.4 321.4" class="c"/>
<path d="M711 319.2L704.6 319.2L702.4 321.4L704.6 323.6L711 323.6Z" stroke="#7a7a7a" stroke-width="0.7"/>
<text fill="#2e2e2e" stroke="none" x="713" y="322.5" font-size="3.66">MICN0</text>
<text fill="#2e2e2e" stroke="none" x="754.5" y="322.5" font-size="3.66" text-anchor="middle">[1]</text>
<path d="M649.2 329.8L702.4 329.8" class="c"/>
<path d="M711 327.6L704.6 327.6L702.4 329.8L704.6 332L711 332Z" stroke="#7a7a7a" stroke-width="0.7"/>
<text fill="#2e2e2e" stroke="none" x="713" y="330.9" font-size="3.66">MICP0</text>
<text fill="#2e2e2e" stroke="none" x="754.5" y="330.9" font-size="3.66" text-anchor="middle">[1]</text>
<path d="M649.2 346.6L702.4 346.6" class="c"/>
<path d="M702.4 344.4L708.8 344.4L711 346.6L708.8 348.8L702.4 348.8Z" stroke="#7a7a7a" stroke-width="0.7"/>
<text fill="#2e2e2e" stroke="none" x="713" y="347.7" font-size="3.66">XMP3_L</text>
<text fill="#2e2e2e" stroke="none" x="754.5" y="347.7" font-size="3.66" text-anchor="middle">[1]</text>
<path d="M649.2 355L702.4 355" class="c"/>
<path d="M711 352.8L704.6 352.8L702.4 355L704.6 357.2L711 357.2Z" stroke="#7a7a7a" stroke-width="0.7"/>
<text fill="#2e2e2e" stroke="none" x="713" y="356.1" font-size="3.66">AU_HSPN</text>
<text fill="#2e2e2e" stroke="none" x="754.5" y="356.1" font-size="3.66" text-anchor="middle">[1]</text>
<path d="M649.2 363.4L702.4 363.4" class="c"/>
<path d="M702.4 361.2L708.8 361.2L711 363.4L708.8 365.6L702.4 365.6Z" stroke="#7a7a7a" stroke-width="0.7"/>
<text fill="#2e2e2e" stroke="none" x="713" y="364.5" font-size="3.66">XMP3_R</text>
<text fill="#2e2e2e" stroke="none" x="754.5" y="364.5" font-size="3.66" text-anchor="middle">[1]</text>
<path d="M649.2 371.8L657 371.8" class="c"/>
<path d="M649.2 380.2L702.4 380.2" class="c"/>
<path d="M711 378L704.6 378L702.4 380.2L704.6 382.4L711 382.4Z" stroke="#7a7a7a" stroke-width="0.7"/>
<text fill="#2e2e2e" stroke="none" x="713" y="381.3" font-size="3.66">HP_EINT</text>
<text fill="#2e2e2e" stroke="none" x="754.5" y="381.3" font-size="3.66" text-anchor="middle">[1]</text>
<path d="M649.2 397L702.4 397" class="c"/>
<path d="M711 394.8L704.6 394.8L702.4 397L704.6 399.2L711 399.2Z" stroke="#7a7a7a" stroke-width="0.7"/>
<text fill="#2e2e2e" stroke="none" x="713" y="398.1" font-size="3.66">FM_ANT_P</text>
<text fill="#2e2e2e" stroke="none" x="754.5" y="398.1" font-size="3.66" text-anchor="middle">[1]</text>
<path d="M649.2 405.4L702.4 405.4" class="c"/>
<path d="M711 403.2L704.6 403.2L702.4 405.4L704.6 407.6L711 407.6Z" stroke="#7a7a7a" stroke-width="0.7"/>
<text fill="#2e2e2e" stroke="none" x="713" y="406.5" font-size="3.66">FM_ANT_N</text>
<text fill="#2e2e2e" stroke="none" x="754.5" y="406.5" font-size="3.66" text-anchor="middle">[1]</text>
<path d="M1091 277.3L1091 239.6L1259.2 239.6" class="c"/>
<path d="M1112.6 235.6L1112.6 243.6" stroke="#555" stroke-width="0.8" class="c"/>
<path d="M1115.6 235.6L1115.6 243.6" stroke="#555" stroke-width="0.8" class="c"/>
<path d="M1112.9 239.6H1115.3" stroke="#fff" stroke-width="1.6"/>
<text fill="#2e2e2e" stroke="none" x="1110.6" y="238.4" font-size="3.66" text-anchor="end">100pF</text>
<text fill="#2e2e2e" stroke="none" x="1118" y="238.4" font-size="3.66">C114</text>
<circle cx="1135.4" cy="239.6" r="1.15" fill="#111" stroke="none"/>
<path d="M1135.4 239.6L1135.4 277" class="c"/>
<path d="M1131.8 256.6L1139 256.6" stroke="#777" stroke-width="0.8" class="c"/>
<path d="M1131.8 259.4L1139 259.4" stroke="#777" stroke-width="0.8" class="c"/>
<path d="M1135.4 256.9V259.1" stroke="#fff" stroke-width="1.6"/>
<path d="M1131.8 277L1139 277" stroke="#8a8a8a" stroke-width="0.8" class="c"/>
<path d="M1133.2 279.1L1137.6 279.1" stroke="#8a8a8a" stroke-width="0.7" class="c"/>
<path d="M1134.5 281.2L1136.3 281.2" stroke="#8a8a8a" stroke-width="0.7" class="c"/>
<text fill="#2e2e2e" stroke="none" x="1133" y="254" font-size="3.66" text-anchor="end">C116</text>
<text fill="#2e2e2e" stroke="none" x="1133" y="263" font-size="3.66" text-anchor="end">22pF</text>
<circle cx="1155.8" cy="239.6" r="1.15" fill="#111" stroke="none"/>
<path d="M1155.8 239.6L1155.8 249" class="c"/>
<path d="M1155.8 249a2.1 2.3 0 0 0 0 4.7a2.1 2.3 0 0 0 0 4.7a2.1 2.3 0 0 0 0 4.7" stroke-width=".8"/>
<path d="M1155.8 263L1155.8 277" class="c"/>
<path d="M1152.2 277L1159.4 277" stroke="#8a8a8a" stroke-width="0.8" class="c"/>
<path d="M1153.6 279.1L1158 279.1" stroke="#8a8a8a" stroke-width="0.7" class="c"/>
<path d="M1154.9 281.2L1156.7 281.2" stroke="#8a8a8a" stroke-width="0.7" class="c"/>
<text fill="#2e2e2e" stroke="none" x="1153" y="254" font-size="3.66" text-anchor="end">L102</text>
<text fill="#2e2e2e" stroke="none" x="1153" y="260.4" font-size="3.66" text-anchor="end">100nH</text>
<path d="M946 275.1L951.8 275.1L954 277.3L951.8 279.5L946 279.5Z" stroke="#7a7a7a" stroke-width="0.7"/>
<text fill="#2e2e2e" stroke="none" x="944" y="278.4" font-size="3.66" text-anchor="end">FM_ANT_P</text>
<text fill="#2e2e2e" stroke="none" x="901.6" y="277.9" font-size="3.66" text-anchor="middle">[1]</text>
<path d="M954 277.3L1091 277.3" class="c"/>
<circle cx="1091" cy="277.3" r="1.15" fill="#111" stroke="none"/>
<path d="M1064.8 273.3L1064.8 281.3" stroke="#555" stroke-width="0.8" class="c"/>
<path d="M1067.8 273.3L1067.8 281.3" stroke="#555" stroke-width="0.8" class="c"/>
<path d="M1065.1 277.3H1067.5" stroke="#fff" stroke-width="1.6"/>
<text fill="#2e2e2e" stroke="none" x="1061.6" y="275.6" font-size="3.66" text-anchor="end">C134</text>
<text fill="#2e2e2e" stroke="none" x="1070.6" y="276" font-size="3.66">3pF</text>
<path d="M946 287.8L951.8 287.8L954 290L951.8 292.2L946 292.2Z" stroke="#7a7a7a" stroke-width="0.7"/>
<text fill="#2e2e2e" stroke="none" x="944" y="291.1" font-size="3.66" text-anchor="end">XMICP</text>
<text fill="#2e2e2e" stroke="none" x="901.6" y="290.6" font-size="3.66" text-anchor="middle">[1]</text>
<path d="M954 290L1060 290" class="c"/>
<path d="M1060 290a2.2 1.9 0 0 1 4.3 0a2.2 1.9 0 0 1 4.3 0a2.2 1.9 0 0 1 4.3 0" stroke-width=".8"/>
<path d="M1073 290L1252.8 290" class="c"/>
<text fill="#2e2e2e" stroke="none" x="1066.5" y="286.8" font-size="3.66" text-anchor="middle">R108</text>
<path d="M946 296L951.8 296L954 298.2L951.8 300.4L946 300.4Z" stroke="#7a7a7a" stroke-width="0.7"/>
<text fill="#2e2e2e" stroke="none" x="944" y="299.3" font-size="3.66" text-anchor="end">AU_HSPN</text>
<text fill="#2e2e2e" stroke="none" x="901.6" y="298.8" font-size="3.66" text-anchor="middle">[1]</text>
<path d="M954 298.2L1060 298.2" class="c"/>
<path d="M1060 298.2a2.2 1.9 0 0 1 4.3 0a2.2 1.9 0 0 1 4.3 0a2.2 1.9 0 0 1 4.3 0" stroke-width=".8"/>
<path d="M1073 298.2L1229.7 298.2" class="c"/>
<text fill="#2e2e2e" stroke="none" x="1059" y="297.2" font-size="3.66" text-anchor="end">R110</text>
<text fill="#2e2e2e" stroke="none" x="1074" y="297.2" font-size="3.66">3.3K</text>
<circle cx="1082.7" cy="298.2" r="1.15" fill="#111" stroke="none"/>
<circle cx="1091" cy="298.2" r="1.15" fill="#111" stroke="none"/>
<path d="M946 304.3L951.8 304.3L954 306.5L951.8 308.7L946 308.7Z" stroke="#7a7a7a" stroke-width="0.7"/>
<text fill="#2e2e2e" stroke="none" x="944" y="307.6" font-size="3.66" text-anchor="end">XMP3_L</text>
<text fill="#2e2e2e" stroke="none" x="901.6" y="307.1" font-size="3.66" text-anchor="middle">[1]</text>
<path d="M954 306.5L1000.8 306.5" class="c"/>
<path d="M1000.8 306.5L1002.1 304.4L1004.6 308.6L1007.1 304.4L1009.7 308.6L1012.2 304.4L1014.7 308.6L1016 306.5" stroke-width="0.8"/>
<path d="M1016 306.5L1060 306.5" class="c"/>
<path d="M1060 306.5a2.2 1.9 0 0 1 4.3 0a2.2 1.9 0 0 1 4.3 0a2.2 1.9 0 0 1 4.3 0" stroke-width=".8"/>
<path d="M1073 306.5L1174.9 306.5" class="c"/>
<text fill="#2e2e2e" stroke="none" x="1000" y="305.4" font-size="3.66" text-anchor="end">R113</text>
<text fill="#2e2e2e" stroke="none" x="1017" y="305.4" font-size="3.66">15R</text>
<text fill="#2e2e2e" stroke="none" x="1066.5" y="303.6" font-size="3.66" text-anchor="middle">R111</text>
<circle cx="975.4" cy="306.5" r="1.15" fill="#111" stroke="none"/>
<circle cx="1032.3" cy="306.5" r="1.15" fill="#111" stroke="none"/>
<path d="M946 346.2L951.8 346.2L954 348.4L951.8 350.6L946 350.6Z" stroke="#7a7a7a" stroke-width="0.7"/>
<text fill="#2e2e2e" stroke="none" x="944" y="349.5" font-size="3.66" text-anchor="end">HP_EINT</text>
<text fill="#2e2e2e" stroke="none" x="901.6" y="349" font-size="3.66" text-anchor="middle">[1]</text>
<path d="M954 348.4L1174.9 348.4" class="c"/>
<circle cx="1101" cy="348.4" r="1.15" fill="#111" stroke="none"/>
<path d="M946 354.8L951.8 354.8L954 357L951.8 359.2L946 359.2Z" stroke="#7a7a7a" stroke-width="0.7"/>
<text fill="#2e2e2e" stroke="none" x="944" y="358.1" font-size="3.66" text-anchor="end">XMP3_R</text>
<text fill="#2e2e2e" stroke="none" x="901.6" y="357.6" font-size="3.66" text-anchor="middle">[1]</text>
<path d="M954 357L1000.8 357" class="c"/>
<path d="M1000.8 357L1002.1 354.9L1004.6 359.1L1007.1 354.9L1009.7 359.1L1012.2 354.9L1014.7 359.1L1016 357" stroke-width="0.8"/>
<path d="M1016 357L1060 357" class="c"/>
<path d="M1060 357a2.2 1.9 0 0 1 4.3 0a2.2 1.9 0 0 1 4.3 0a2.2 1.9 0 0 1 4.3 0" stroke-width=".8"/>
<path d="M1073 357L1204.6 357" class="c"/>
<text fill="#2e2e2e" stroke="none" x="1000" y="355.8" font-size="3.66" text-anchor="end">R112</text>
<text fill="#2e2e2e" stroke="none" x="1017" y="355.8" font-size="3.66">15R</text>
<text fill="#2e2e2e" stroke="none" x="1066.5" y="354" font-size="3.66" text-anchor="middle">R109</text>
<circle cx="985.8" cy="357" r="1.15" fill="#111" stroke="none"/>
<circle cx="1042.3" cy="357" r="1.15" fill="#111" stroke="none"/>
<path d="M975.4 306.5L975.4 396.5" class="c"/>
<path d="M971.8 379.6L979 379.6" stroke="#777" stroke-width="0.8" class="c"/>
<path d="M971.8 382.6L979 382.6" stroke="#777" stroke-width="0.8" class="c"/>
<path d="M975.4 379.9V382.3" stroke="#fff" stroke-width="1.6"/>
<path d="M971.8 396.5L979 396.5" stroke="#8a8a8a" stroke-width="0.8" class="c"/>
<path d="M973.2 398.6L977.6 398.6" stroke="#8a8a8a" stroke-width="0.7" class="c"/>
<path d="M974.5 400.7L976.3 400.7" stroke="#8a8a8a" stroke-width="0.7" class="c"/>
<path d="M985.8 357L985.8 396.5" class="c"/>
<path d="M982.2 379.6L989.4 379.6" stroke="#777" stroke-width="0.8" class="c"/>
<path d="M982.2 382.6L989.4 382.6" stroke="#777" stroke-width="0.8" class="c"/>
<path d="M985.8 379.9V382.3" stroke="#fff" stroke-width="1.6"/>
<path d="M982.2 396.5L989.4 396.5" stroke="#8a8a8a" stroke-width="0.8" class="c"/>
<path d="M983.6 398.6L988 398.6" stroke="#8a8a8a" stroke-width="0.7" class="c"/>
<path d="M984.9 400.7L986.7 400.7" stroke="#8a8a8a" stroke-width="0.7" class="c"/>
<text fill="#2e2e2e" stroke="none" x="969.4" y="372" font-size="3.66" text-anchor="middle">C104</text>
<text fill="#2e2e2e" stroke="none" x="981.6" y="372" font-size="3.66" text-anchor="middle">C105</text>
<text fill="#2e2e2e" stroke="none" x="970.5" y="383" font-size="3.66" text-anchor="middle">NC</text>
<text fill="#2e2e2e" stroke="none" x="982.4" y="383" font-size="3.66" text-anchor="middle">NC</text>
<path d="M1032.3 306.5L1032.3 396.5" class="c"/>
<rect x="1029" y="374.2" width="6.6" height="8.8" fill="#fff" stroke="#444" stroke-width="0.8" class="c"/>
<path d="M1030.1 375.2L1034.5 375.2L1032.3 378.6Z" stroke-width="0.3" fill="#111"/>
<path d="M1030.1 382L1034.5 382L1032.3 378.6Z" stroke-width="0.3" fill="#111"/>
<path d="M1029.7 378.6L1034.9 378.6" stroke="#111" stroke-width="0.9" class="c"/>
<path d="M1028.7 396.5L1035.9 396.5" stroke="#8a8a8a" stroke-width="0.8" class="c"/>
<path d="M1030.1 398.6L1034.5 398.6" stroke="#8a8a8a" stroke-width="0.7" class="c"/>
<path d="M1031.4 400.7L1033.2 400.7" stroke="#8a8a8a" stroke-width="0.7" class="c"/>
<path d="M1042.3 357L1042.3 396.5" class="c"/>
<rect x="1039" y="374.2" width="6.6" height="8.8" fill="#fff" stroke="#444" stroke-width="0.8" class="c"/>
<path d="M1040.1 375.2L1044.5 375.2L1042.3 378.6Z" stroke-width="0.3" fill="#111"/>
<path d="M1040.1 382L1044.5 382L1042.3 378.6Z" stroke-width="0.3" fill="#111"/>
<path d="M1039.7 378.6L1044.9 378.6" stroke="#111" stroke-width="0.9" class="c"/>
<path d="M1038.7 396.5L1045.9 396.5" stroke="#8a8a8a" stroke-width="0.8" class="c"/>
<path d="M1040.1 398.6L1044.5 398.6" stroke="#8a8a8a" stroke-width="0.7" class="c"/>
<path d="M1041.4 400.7L1043.2 400.7" stroke="#8a8a8a" stroke-width="0.7" class="c"/>
<text fill="#2e2e2e" stroke="none" x="1038" y="372" font-size="3.66" text-anchor="middle">T111 T112</text>
<path d="M1082.7 298.2L1082.7 381" class="c"/>
<path d="M1082.7 381a1.6 1.8 0 0 0 0 3.5a1.6 1.8 0 0 0 0 3.5a1.6 1.8 0 0 0 0 3.5" stroke-width=".8"/>
<path d="M1082.7 391.5L1082.7 413.8" class="c"/>
<circle cx="1082.7" cy="405" r="1.15" fill="#111" stroke="none"/>
<circle cx="1082.7" cy="413.8" r="1.15" fill="#111" stroke="none"/>
<text fill="#2e2e2e" stroke="none" x="1080.4" y="386.6" font-size="3.66" text-anchor="end">R112</text>
<path d="M1091 277.3L1091 396.5" class="c"/>
<rect x="1087.7" y="371.2" width="6.6" height="8.8" fill="#fff" stroke="#444" stroke-width="0.8" class="c"/>
<path d="M1088.8 372.2L1093.2 372.2L1091 375.6Z" stroke-width="0.3" fill="#111"/>
<path d="M1088.8 379L1093.2 379L1091 375.6Z" stroke-width="0.3" fill="#111"/>
<path d="M1088.4 375.6L1093.6 375.6" stroke="#111" stroke-width="0.9" class="c"/>
<path d="M1087.4 396.5L1094.6 396.5" stroke="#8a8a8a" stroke-width="0.8" class="c"/>
<path d="M1088.8 398.6L1093.2 398.6" stroke="#8a8a8a" stroke-width="0.7" class="c"/>
<path d="M1090.1 400.7L1091.9 400.7" stroke="#8a8a8a" stroke-width="0.7" class="c"/>
<circle cx="1101" cy="290" r="1.15" fill="#111" stroke="none"/>
<path d="M1101 290L1101 337" class="c"/>
<rect x="1097.7" y="314.6" width="6.6" height="8.8" fill="#fff" stroke="#444" stroke-width="0.8" class="c"/>
<path d="M1098.8 315.6L1103.2 315.6L1101 319Z" stroke-width="0.3" fill="#111"/>
<path d="M1098.8 322.4L1103.2 322.4L1101 319Z" stroke-width="0.3" fill="#111"/>
<path d="M1098.4 319L1103.6 319" stroke="#111" stroke-width="0.9" class="c"/>
<path d="M1097.4 337L1104.6 337" stroke="#8a8a8a" stroke-width="0.8" class="c"/>
<path d="M1098.8 339.1L1103.2 339.1" stroke="#8a8a8a" stroke-width="0.7" class="c"/>
<path d="M1100.1 341.2L1101.9 341.2" stroke="#8a8a8a" stroke-width="0.7" class="c"/>
<path d="M1101 348.4L1101 396.5" class="c"/>
<rect x="1097.7" y="371.2" width="6.6" height="8.8" fill="#fff" stroke="#444" stroke-width="0.8" class="c"/>
<path d="M1098.8 372.2L1103.2 372.2L1101 375.6Z" stroke-width="0.3" fill="#111"/>
<path d="M1098.8 379L1103.2 379L1101 375.6Z" stroke-width="0.3" fill="#111"/>
<path d="M1098.4 375.6L1103.6 375.6" stroke="#111" stroke-width="0.9" class="c"/>
<path d="M1097.4 396.5L1104.6 396.5" stroke="#8a8a8a" stroke-width="0.8" class="c"/>
<path d="M1098.8 398.6L1103.2 398.6" stroke="#8a8a8a" stroke-width="0.7" class="c"/>
<path d="M1100.1 400.7L1101.9 400.7" stroke="#8a8a8a" stroke-width="0.7" class="c"/>
<text fill="#2e2e2e" stroke="none" x="1104" y="313.4" font-size="3.66">T107</text>
<text fill="#2e2e2e" stroke="none" x="1092.6" y="369.4" font-size="3.66">T109</text>
<text fill="#2e2e2e" stroke="none" x="1103.4" y="369.4" font-size="3.66">T108</text>
<text fill="#2e2e2e" stroke="none" x="1115.4" y="369.4" font-size="3.66">L101</text>
<circle cx="1113.8" cy="290" r="1.15" fill="#111" stroke="none"/>
<path d="M1113.8 290L1113.8 372" class="c"/>
<path d="M1110.2 327L1117.4 327" stroke="#777" stroke-width="0.8" class="c"/>
<path d="M1110.2 330L1117.4 330" stroke="#777" stroke-width="0.8" class="c"/>
<path d="M1113.8 327.3V329.7" stroke="#fff" stroke-width="1.6"/>
<path d="M1113.8 372a1.6 1.8 0 0 0 0 3.7a1.6 1.8 0 0 0 0 3.7a1.6 1.8 0 0 0 0 3.7" stroke-width=".8"/>
<path d="M1113.8 383L1113.8 396.5" class="c"/>
<path d="M1110.2 396.5L1117.4 396.5" stroke="#8a8a8a" stroke-width="0.8" class="c"/>
<path d="M1111.6 398.6L1116 398.6" stroke="#8a8a8a" stroke-width="0.7" class="c"/>
<path d="M1112.9 400.7L1114.7 400.7" stroke="#8a8a8a" stroke-width="0.7" class="c"/>
<text fill="#2e2e2e" stroke="none" x="1116.4" y="324" font-size="3.66">NC</text>
<text fill="#2e2e2e" stroke="none" x="1116.4" y="335.4" font-size="3.66">C127</text>
<text fill="#2e2e2e" stroke="none" x="1116.4" y="381" font-size="3.66">NC</text>
<path d="M946 402.8L951.8 402.8L954 405L951.8 407.2L946 407.2Z" stroke="#7a7a7a" stroke-width="0.7"/>
<text fill="#2e2e2e" stroke="none" x="944" y="406.1" font-size="3.66" text-anchor="end">AVSS30_AUD</text>
<text fill="#2e2e2e" stroke="none" x="901.6" y="405.6" font-size="3.66" text-anchor="middle">[1]</text>
<path d="M954 405L1082.7 405" class="c"/>
<text fill="#2e2e2e" stroke="none" x="1010" y="404" font-size="3.66" text-anchor="middle">0.20mm</text>
<path d="M946 411.6L951.8 411.6L954 413.8L951.8 416L946 416Z" stroke="#7a7a7a" stroke-width="0.7"/>
<text fill="#2e2e2e" stroke="none" x="944" y="414.9" font-size="3.66" text-anchor="end">FM_ANT_N</text>
<text fill="#2e2e2e" stroke="none" x="901.6" y="414.4" font-size="3.66" text-anchor="middle">[1]</text>
<path d="M954 413.8L1139 413.8" class="c"/>
<rect x="1032" y="413" width="8" height="1.7" fill="#111" stroke-width="0" class="c"/>
<text fill="#2e2e2e" stroke="none" x="1036" y="411.6" font-size="3.66" text-anchor="middle">R101</text>
<path d="M1097.4 409.8L1097.4 417.8" stroke="#555" stroke-width="0.8" class="c"/>
<path d="M1100.4 409.8L1100.4 417.8" stroke="#555" stroke-width="0.8" class="c"/>
<path d="M1097.7 413.8H1100.1" stroke="#fff" stroke-width="1.6"/>
<text fill="#2e2e2e" stroke="none" x="1095.4" y="412.4" font-size="3.66" text-anchor="end">R129</text>
<text fill="#2e2e2e" stroke="none" x="1102.4" y="412.4" font-size="3.66">1.5pF</text>
<path d="M1147 411.6L1141.2 411.6L1139 413.8L1141.2 416L1147 416Z" stroke="#7a7a7a" stroke-width="0.7"/>
<text fill="#2e2e2e" stroke="none" x="1150" y="415" font-size="3.66">XMICN</text>
<text fill="#2e2e2e" stroke="none" x="1169.6" y="414.6" font-size="3.66" text-anchor="middle">[1]</text>
<path d="M1082.7 413.8L1082.7 443.6" class="c"/>
<path d="M1079.1 427.6L1086.3 427.6" stroke="#777" stroke-width="0.8" class="c"/>
<path d="M1079.1 430.6L1086.3 430.6" stroke="#777" stroke-width="0.8" class="c"/>
<path d="M1082.7 427.9V430.3" stroke="#fff" stroke-width="1.6"/>
<text fill="#2e2e2e" stroke="none" x="1078.4" y="424.6" font-size="3.66" text-anchor="end">C128</text>
<text fill="#2e2e2e" stroke="none" x="1078.4" y="435.6" font-size="3.66" text-anchor="end">100nF</text>
<rect x="1076" y="443.6" width="12" height="13.4" stroke-width="0.8" stroke-dasharray="2 1.6" class="c"/>
<path d="M1079.1 447.6L1086.3 447.6" stroke="#666" stroke-width="0.8" class="c"/>
<path d="M1080.5 449.7L1084.9 449.7" stroke="#666" stroke-width="0.7" class="c"/>
<path d="M1081.8 451.8L1083.6 451.8" stroke="#666" stroke-width="0.7" class="c"/>
<text fill="#2e2e2e" stroke="none" x="1089.4" y="442.6" font-size="3.66">Single via to main GND</text>
<text fill="#2e2e2e" stroke="none" x="1145.4" y="288.8" font-size="3.66">1  MIC</text>
<text fill="#2e2e2e" stroke="none" x="1145.4" y="297" font-size="3.66">2  GND</text>
<text fill="#2e2e2e" stroke="none" x="1145.4" y="305.2" font-size="3.66">4  L</text>
<text fill="#2e2e2e" stroke="none" x="1145.4" y="347.2" font-size="3.66">5  DETECT</text>
<text fill="#2e2e2e" stroke="none" x="1145.4" y="355.8" font-size="3.66">3  R</text>
<path d="M1137.3 327.7L1281.8 327.7" stroke-width="0.8" class="c"/>
<path d="M1153.1 324L1164 319L1164 336.4L1153.1 331.3Z" stroke-width="0.8"/>
<path d="M1166.3 317.2L1183.9 321.5L1183.9 333.9L1166.3 338.4Z" stroke-width="0.8"/>
<path d="M1164 319L1166.3 317.2" stroke-width="0.7"/>
<path d="M1164 336.4L1166.3 338.4" stroke-width="0.7"/>
<rect x="1183.9" y="319.3" width="3.2" height="16.8" stroke-width="0.8" class="c"/>
<path d="M1185.5 319.3L1185.5 336.1" stroke-width="0.6" class="c"/>
<rect x="1187.1" y="321.3" width="4.5" height="13.1" fill="#111" stroke-width="0" class="c"/>
<rect x="1193" y="317.2" width="21.6" height="21.2" stroke-width="0.8" class="c"/>
<path d="M1191.6 321.3L1193 321.3" stroke-width="0.6" class="c"/>
<path d="M1191.6 334.4L1193 334.4" stroke-width="0.6" class="c"/>
<rect x="1214.6" y="319" width="4.4" height="17.1" fill="#111" stroke-width="0" class="c"/>
<rect x="1219" y="317.2" width="18.7" height="21.2" stroke-width="0.8" class="c"/>
<rect x="1237.7" y="319" width="4.5" height="17.1" fill="#111" stroke-width="0" class="c"/>
<rect x="1242.2" y="317.2" width="18.4" height="21.2" stroke-width="0.8" class="c"/>
<path d="M1269.5 308.8H1264.4Q1260.8 308.8 1260.8 312.4V343Q1260.8 346.6 1264.4 346.6H1269.5Z" fill="#fff" stroke-width=".8"/>
<path d="M1264 309.2Q1261.2 309.6 1261.2 312.4V343Q1261.2 345.8 1264 346.2Z" fill="#d4d4d4" stroke="none"/>
<path d="M1264 309L1264 346.4" stroke="#777" stroke-width="0.6" class="c"/>
<text fill="#2e2e2e" stroke="none" x="1171.5" y="326.4" font-size="3.66" text-anchor="middle">L</text>
<text fill="#2e2e2e" stroke="none" x="1203" y="326.4" font-size="3.66" text-anchor="middle">R</text>
<text fill="#2e2e2e" stroke="none" x="1229" y="326.4" font-size="3.66" text-anchor="middle">GND</text>
<text fill="#2e2e2e" stroke="none" x="1251.6" y="326.4" font-size="3.66" text-anchor="middle">MIC</text>
<path d="M1251 290L1252.8 291.5L1252.8 311.6"/>
<path d="M1250.8 311.6L1254.8 311.6L1252.8 314.6Z" stroke-width="0.7" fill="#fff"/>
<path d="M1228 298.2L1229.7 299.7L1229.7 311.6"/>
<path d="M1227.7 311.6L1231.7 311.6L1229.7 314.6Z" stroke-width="0.7" fill="#fff"/>
<path d="M1173 306.5L1174.9 308L1174.9 313.8"/>
<path d="M1172.9 313.8L1176.9 313.8L1174.9 316.8Z" stroke-width="0.7" fill="#fff"/>
<path d="M1173 348.4L1174.9 347L1174.9 341.8"/>
<path d="M1172.9 341.8L1176.9 341.8L1174.9 338.8Z" stroke-width="0.7" fill="#fff"/>
<path d="M1203 357L1204.6 355.6L1204.6 343.8"/>
<path d="M1202.6 343.8L1206.6 343.8L1204.6 340.8Z" stroke-width="0.7" fill="#fff"/>
<text fill="#2e2e2e" stroke="none" x="1194.2" y="307.6" font-size="3.9" textLength="36.8" lengthAdjust="spacingAndGlyphs">American Standard</text>
<text fill="#2e2e2e" stroke="none" x="1194.2" y="315.2" font-size="3.66">J103</text>
<text fill="#2e2e2e" stroke="none" x="1211" y="346.6" font-size="3.9" textLength="36.8" lengthAdjust="spacingAndGlyphs">American Standard</text>
<text fill="#2e2e2e" stroke="none" x="1211" y="352" font-size="3.66">JACK-R43E-5PIN-41-65M1.25D-4H.95</text>
<rect x="1258.6" y="231.2" width="25.8" height="33.2" fill="#fff" stroke-width="0.9" class="c"/>
<text fill="#2e2e2e" stroke="none" x="1259.4" y="229.8" font-size="3.66">U101</text>
<text fill="#2e2e2e" stroke="none" x="1261" y="241" font-size="3.66">RFIN</text>
<text fill="#2e2e2e" stroke="none" x="1261" y="249.4" font-size="3.66">EN</text>
<text fill="#2e2e2e" stroke="none" x="1261" y="257.4" font-size="3.66">GND</text>
<text fill="#2e2e2e" stroke="none" x="1282.4" y="241" font-size="3.66" text-anchor="end">VCC</text>
<text fill="#2e2e2e" stroke="none" x="1282.4" y="249.4" font-size="3.66" text-anchor="end">NC</text>
<text fill="#2e2e2e" stroke="none" x="1282.4" y="257.4" font-size="3.66" text-anchor="end">RFOUT</text>
<text fill="#2e2e2e" stroke="none" x="1258" y="238.6" font-size="3.42" text-anchor="end">6</text>
<text fill="#2e2e2e" stroke="none" x="1258" y="247" font-size="3.42" text-anchor="end">5</text>
<text fill="#2e2e2e" stroke="none" x="1258" y="255" font-size="3.42" text-anchor="end">4</text>
<text fill="#2e2e2e" stroke="none" x="1285.4" y="238.6" font-size="3.42">1</text>
<text fill="#2e2e2e" stroke="none" x="1285.4" y="247" font-size="3.42">2</text>
<text fill="#2e2e2e" stroke="none" x="1285.4" y="255" font-size="3.42">3</text>
<text fill="#2e2e2e" stroke="none" x="1270.4" y="270.2" font-size="3.66" text-anchor="middle" textLength="33" lengthAdjust="spacingAndGlyphs">AW5011ALR/NRFD</text>
<path d="M1190.8 239.6H1204" stroke="#fff" stroke-width="1.6"/>
<path d="M1190.8 239.6a2.2 2 0 0 1 4.4 0a2.2 2 0 0 1 4.4 0a2.2 2 0 0 1 4.4 0" stroke-width=".8"/>
<text fill="#2e2e2e" stroke="none" x="1189.6" y="238.4" font-size="3.66" text-anchor="end">100nH</text>
<text fill="#2e2e2e" stroke="none" x="1205" y="238.4" font-size="3.66">L103</text>
<text fill="#2e2e2e" stroke="none" x="1226.4" y="238.4" font-size="3.66" text-anchor="end">1pF</text>
<path d="M1228 235.6L1228 243.6" stroke="#555" stroke-width="0.8" class="c"/>
<path d="M1231 235.6L1231 243.6" stroke="#555" stroke-width="0.8" class="c"/>
<path d="M1228.3 239.6H1230.7" stroke="#fff" stroke-width="1.6"/>
<text fill="#2e2e2e" stroke="none" x="1233" y="238.4" font-size="3.66">C106</text>
<text fill="#2e2e2e" stroke="none" x="1208.6" y="249.2" font-size="3.66" text-anchor="end">[1] GPIO69_FM_LNA_EN</text>
<path d="M1210.8 245.8L1216 245.8L1218.2 248L1216 250.2L1210.8 250.2Z" stroke="#7a7a7a" stroke-width="0.7"/>
<path d="M1218.2 248L1259.2 248" class="c"/>
<circle cx="1233.8" cy="248" r="1.15" fill="#111" stroke="none"/>
<path d="M1233.8 248L1233.8 279" class="c"/>
<path d="M1230.2 262.6L1237.4 262.6" stroke="#777" stroke-width="0.8" class="c"/>
<path d="M1230.2 265.6L1237.4 265.6" stroke="#777" stroke-width="0.8" class="c"/>
<path d="M1233.8 262.9V265.3" stroke="#fff" stroke-width="1.6"/>
<path d="M1230.2 279L1237.4 279" stroke="#8a8a8a" stroke-width="0.8" class="c"/>
<path d="M1231.6 281.1L1236 281.1" stroke="#8a8a8a" stroke-width="0.7" class="c"/>
<path d="M1232.9 283.2L1234.7 283.2" stroke="#8a8a8a" stroke-width="0.7" class="c"/>
<text fill="#2e2e2e" stroke="none" x="1231" y="258.6" font-size="3.66" text-anchor="end">C126</text>
<text fill="#2e2e2e" stroke="none" x="1231" y="268.8" font-size="3.66" text-anchor="end">1nF</text>
<path d="M1240 256L1259.2 256" class="c"/>
<path d="M1240 254.2L1240 257.8" stroke="#777" stroke-width="0.6" class="c"/>
<path d="M1283.8 239.6L1308 239.6" class="c"/>
<path d="M1308 239.6L1309.5 237.8L1312.5 241.4L1315.5 237.8L1318.5 241.4L1321.5 237.8L1324.5 241.4L1326 239.6" stroke-width="0.8"/>
<path d="M1326 239.6L1338.8 239.6" class="c"/>
<circle cx="1340.8" cy="239.6" r="2" fill="#fff"/>
<circle cx="1298.5" cy="239.6" r="1.15" fill="#111" stroke="none"/>
<text fill="#2e2e2e" stroke="none" x="1300.4" y="238" font-size="3.66">R105</text>
<text fill="#2e2e2e" stroke="none" x="1328.4" y="238" font-size="3.66">0R</text>
<text fill="#2e2e2e" stroke="none" x="1345.4" y="240.8" font-size="3.66">VIO28_PMU</text>
<path d="M1298.5 239.6L1298.5 245.6L1314.6 245.6" class="c"/>
<path d="M1314.6 242.8L1314.6 248.4" stroke="#555" stroke-width="0.8" class="c"/>
<path d="M1317.4 242.8L1317.4 248.4" stroke="#555" stroke-width="0.8" class="c"/>
<path d="M1317.4 245.6L1334 245.6" stroke="#999" class="c"/>
<path d="M1334 243.6L1334 247.6" stroke="#999" stroke-width="0.6" class="c"/>
<text fill="#2e2e2e" stroke="none" x="1302" y="244.4" font-size="3.66">C115</text>
<text fill="#2e2e2e" stroke="none" x="1320" y="244.4" font-size="3.66">2.2uF</text>
<path d="M1283.8 248L1290.4 248" class="c"/>
<path d="M1283.8 256L1335 256" class="c"/>
<path d="M1315.6 252L1315.6 260" stroke="#555" stroke-width="0.8" class="c"/>
<path d="M1318.6 252L1318.6 260" stroke="#555" stroke-width="0.8" class="c"/>
<path d="M1315.9 256H1318.3" stroke="#fff" stroke-width="1.6"/>
<text fill="#2e2e2e" stroke="none" x="1303.6" y="254.8" font-size="3.66">C117</text>
<text fill="#2e2e2e" stroke="none" x="1321.6" y="254.8" font-size="3.66">1nF</text>
<path d="M1335 253.8L1340.2 253.8L1342.4 256L1340.2 258.2L1335 258.2Z" stroke="#7a7a7a" stroke-width="0.7"/>
<text fill="#2e2e2e" stroke="none" x="1345" y="257.2" font-size="3.66">FM_ANT_P</text>
<text fill="#2e2e2e" stroke="none" x="1371.6" y="256.8" font-size="3.66" text-anchor="middle">[1]</text>
<path d="M593.4 602.8L553.2 602.8L553.2 514.7L658.1 514.7L658.1 596.5" class="c"/>
<path d="M593.4 596.5L559.5 596.5L559.5 519.3L651.8 519.3L651.8 602.8" class="c"/>
<path d="M593.4 609.1L565.6 609.1L565.6 523.5L646 523.5L646 583.9L756 583.9" class="c"/>
<path d="M593.4 615.4L572.1 615.4L572.1 527.7L639.6 527.7L639.6 615.4" class="c"/>
<path d="M572.1 583.9L593.4 583.9" class="c"/>
<circle cx="572.1" cy="583.9" r="1.15" fill="#111" stroke="none"/>
<circle cx="658.1" cy="569.2" r="1.15" fill="#111" stroke="none"/>
<circle cx="651.8" cy="573.4" r="1.15" fill="#111" stroke="none"/>
<circle cx="658.1" cy="596.5" r="1.15" fill="#111" stroke="none"/>
<circle cx="651.8" cy="602.8" r="1.15" fill="#111" stroke="none"/>
<path d="M578.4 548.2L578.4 535.7L590.3 535.7" class="c"/>
<path d="M590.3 535.7L591.5 533.6L594 537.8L596.4 533.6L598.9 537.8L601.3 533.6L603.8 537.8L605 535.7" stroke-width="0.8"/>
<path d="M605 535.7L614.5 535.7L614.5 546.2" class="c"/>
<path d="M574.8 548.2L582 548.2" stroke="#8a8a8a" stroke-width="0.8" class="c"/>
<path d="M576.2 550.3L580.6 550.3" stroke="#8a8a8a" stroke-width="0.7" class="c"/>
<path d="M577.5 552.4L579.3 552.4" stroke="#8a8a8a" stroke-width="0.7" class="c"/>
<text fill="#2e2e2e" stroke="none" x="589.6" y="534.6" font-size="3.66" text-anchor="end">R104</text>
<text fill="#2e2e2e" stroke="none" x="606" y="534.6" font-size="3.66">0R</text>
<path d="M597.7 546.2L614.5 546.2" class="c"/>
<circle cx="605.7" cy="546.2" r="1.15" fill="#111" stroke="none"/>
<circle cx="614.5" cy="546.2" r="1.15" fill="#111" stroke="none"/>
<path d="M597.7 546.2L597.7 562" class="c"/>
<path d="M597.7 640L597.7 655.2" class="c"/>
<path d="M605.7 546.2L605.7 562" class="c"/>
<path d="M605.7 640L605.7 655.2" class="c"/>
<path d="M614.5 546.2L614.5 562" class="c"/>
<path d="M614.5 640L614.5 655.2" class="c"/>
<path d="M597.7 655.2L614.5 655.2" class="c"/>
<circle cx="605.7" cy="655.2" r="1.15" fill="#111" stroke="none"/>
<circle cx="614.5" cy="655.2" r="1.15" fill="#111" stroke="none"/>
<path d="M614.5 655.2L614.5 662.6L607 662.6" class="c"/>
<path d="M592.4 662.6L593.6 660.5L596 664.7L598.5 660.5L600.9 664.7L603.4 660.5L605.8 664.7L607 662.6" stroke-width="0.8"/>
<path d="M577.8 662.6L592.4 662.6" class="c"/>
<path d="M576.6 659.4L576.6 665.8" stroke="#888" stroke-width="0.8" class="c"/>
<path d="M575 660.6L575 664.6" stroke="#888" stroke-width="0.7" class="c"/>
<path d="M573.6 661.8L573.6 663.4" stroke="#888" stroke-width="0.7" class="c"/>
<text fill="#2e2e2e" stroke="none" x="591.6" y="661.4" font-size="3.66" text-anchor="end">R103</text>
<text fill="#2e2e2e" stroke="none" x="608" y="661.4" font-size="3.66">0R</text>
<rect x="592.9" y="558.7" width="26.4" height="83.9" fill="#fff" stroke-width="0.9" rx="13.2"/>
<rect x="603.4" y="568.6" width="5.4" height="64.8" fill="#fff" stroke-width="0.7" rx="2.7"/>
<rect x="604.8" y="570.4" width="2.6" height="61.2" fill="#111" stroke-width="0" rx="1.3"/>
<text fill="#2e2e2e" stroke="none" x="594" y="563.6" font-size="3.66" text-anchor="end">J102</text>
<text fill="#2e2e2e" stroke="none" x="591" y="577" font-size="3.42" text-anchor="end">B12</text>
<text fill="#2e2e2e" stroke="none" x="594.6" y="578.7" font-size="3.42">GND</text>
<text fill="#2e2e2e" stroke="none" x="621.6" y="577" font-size="3.42">A1</text>
<text fill="#2e2e2e" stroke="none" x="617.8" y="578.7" font-size="3.42" text-anchor="end">GND</text>
<text fill="#2e2e2e" stroke="none" x="591" y="583.3" font-size="3.42" text-anchor="end">B9</text>
<text fill="#2e2e2e" stroke="none" x="594.6" y="585" font-size="3.42">VBUS</text>
<text fill="#2e2e2e" stroke="none" x="621.6" y="583.3" font-size="3.42">A4</text>
<text fill="#2e2e2e" stroke="none" x="617.8" y="585" font-size="3.42" text-anchor="end">VBUS</text>
<text fill="#2e2e2e" stroke="none" x="591" y="589.6" font-size="3.42" text-anchor="end">B8</text>
<text fill="#2e2e2e" stroke="none" x="594.6" y="591.3" font-size="3.42">SBU2</text>
<text fill="#2e2e2e" stroke="none" x="621.6" y="589.6" font-size="3.42">A5</text>
<text fill="#2e2e2e" stroke="none" x="617.8" y="591.3" font-size="3.42" text-anchor="end">CC1</text>
<text fill="#2e2e2e" stroke="none" x="591" y="595.9" font-size="3.42" text-anchor="end">B7</text>
<text fill="#2e2e2e" stroke="none" x="594.6" y="597.6" font-size="3.42">DN2</text>
<text fill="#2e2e2e" stroke="none" x="621.6" y="595.9" font-size="3.42">A6</text>
<text fill="#2e2e2e" stroke="none" x="617.8" y="597.6" font-size="3.42" text-anchor="end">DP1</text>
<text fill="#2e2e2e" stroke="none" x="591" y="602.2" font-size="3.42" text-anchor="end">B6</text>
<text fill="#2e2e2e" stroke="none" x="594.6" y="603.9" font-size="3.42">DP2</text>
<text fill="#2e2e2e" stroke="none" x="621.6" y="602.2" font-size="3.42">A7</text>
<text fill="#2e2e2e" stroke="none" x="617.8" y="603.9" font-size="3.42" text-anchor="end">DN1</text>
<text fill="#2e2e2e" stroke="none" x="591" y="608.5" font-size="3.42" text-anchor="end">B5</text>
<text fill="#2e2e2e" stroke="none" x="594.6" y="610.2" font-size="3.42">CC2</text>
<text fill="#2e2e2e" stroke="none" x="621.6" y="608.5" font-size="3.42">A8</text>
<text fill="#2e2e2e" stroke="none" x="617.8" y="610.2" font-size="3.42" text-anchor="end">SBU1</text>
<text fill="#2e2e2e" stroke="none" x="591" y="614.8" font-size="3.42" text-anchor="end">B4</text>
<text fill="#2e2e2e" stroke="none" x="594.6" y="616.5" font-size="3.42">VBUS</text>
<text fill="#2e2e2e" stroke="none" x="621.6" y="614.8" font-size="3.42">A9</text>
<text fill="#2e2e2e" stroke="none" x="617.8" y="616.5" font-size="3.42" text-anchor="end">VBUS</text>
<text fill="#2e2e2e" stroke="none" x="591" y="620.7" font-size="3.42" text-anchor="end">B1</text>
<text fill="#2e2e2e" stroke="none" x="594.6" y="622.4" font-size="3.42">GND</text>
<text fill="#2e2e2e" stroke="none" x="621.6" y="620.7" font-size="3.42">A12</text>
<text fill="#2e2e2e" stroke="none" x="617.8" y="622.4" font-size="3.42" text-anchor="end">GND</text>
<text fill="#2e2e2e" stroke="none" x="598.8" y="572" font-size="3.17" transform="rotate(-90 598.8 572)">GND</text>
<text fill="#2e2e2e" stroke="none" x="607.4" y="569" font-size="3.17" transform="rotate(-90 607.4 569)">GND</text>
<text fill="#2e2e2e" stroke="none" x="615.4" y="572" font-size="3.17" transform="rotate(-90 615.4 572)">GND</text>
<text fill="#2e2e2e" stroke="none" x="598.8" y="638" font-size="3.17" transform="rotate(-90 598.8 638)">GND</text>
<text fill="#2e2e2e" stroke="none" x="607.4" y="643" font-size="3.17" transform="rotate(-90 607.4 643)">GND</text>
<text fill="#2e2e2e" stroke="none" x="615.4" y="638" font-size="3.17" transform="rotate(-90 615.4 638)">GND</text>
<text fill="#2e2e2e" stroke="none" x="610.6" y="553" font-size="3.17" transform="rotate(-90 610.6 553)">18</text>
<text fill="#2e2e2e" stroke="none" x="600.6" y="560" font-size="3.17" transform="rotate(-90 600.6 560)">17</text>
<text fill="#2e2e2e" stroke="none" x="617.4" y="560" font-size="3.17" transform="rotate(-90 617.4 560)">17</text>
<text fill="#2e2e2e" stroke="none" x="610.6" y="650" font-size="3.17" transform="rotate(-90 610.6 650)">21</text>
<text fill="#2e2e2e" stroke="none" x="600.6" y="647" font-size="3.17" transform="rotate(-90 600.6 647)">19</text>
<text fill="#2e2e2e" stroke="none" x="617.4" y="647" font-size="3.17" transform="rotate(-90 617.4 647)">22</text>
<path d="M593.4 577.6L578.4 577.6L578.4 634.3" class="c"/>
<path d="M578.4 621.3L593.4 621.3" class="c"/>
<circle cx="578.4" cy="621.3" r="1.15" fill="#111" stroke="none"/>
<path d="M574.8 634.3L582 634.3" stroke="#8a8a8a" stroke-width="0.8" class="c"/>
<path d="M576.2 636.4L580.6 636.4" stroke="#8a8a8a" stroke-width="0.7" class="c"/>
<path d="M577.5 638.5L579.3 638.5" stroke="#8a8a8a" stroke-width="0.7" class="c"/>
<path d="M585 590.2L593.4 590.2" class="c"/>
<path d="M619 577.6L633.3 577.6L633.3 634.3" class="c"/>
<path d="M619 621.3L633.3 621.3" class="c"/>
<circle cx="633.3" cy="621.3" r="1.15" fill="#111" stroke="none"/>
<path d="M629.7 634.3L636.9 634.3" stroke="#8a8a8a" stroke-width="0.8" class="c"/>
<path d="M631.1 636.4L635.5 636.4" stroke="#8a8a8a" stroke-width="0.7" class="c"/>
<path d="M632.4 638.5L634.2 638.5" stroke="#8a8a8a" stroke-width="0.7" class="c"/>
<path d="M619 583.9L639.6 583.9" class="c"/>
<circle cx="639.6" cy="583.9" r="1.15" fill="#111" stroke="none"/>
<path d="M619 590.2L756 590.2" class="c"/>
<path d="M619 596.5L674.3 596.5" class="c"/>
<path d="M674.3 596.5L675.6 594.4L678.1 598.6L680.6 594.4L683.1 598.6L685.6 594.4L688.1 598.6L689.4 596.5" stroke-width="0.8"/>
<path d="M689.4 596.5L756 596.5" class="c"/>
<path d="M619 602.8L674.3 602.8" class="c"/>
<path d="M674.3 602.8L675.6 600.7L678.1 604.9L680.6 600.7L683.1 604.9L685.6 600.7L688.1 604.9L689.4 602.8" stroke-width="0.8"/>
<path d="M689.4 602.8L756 602.8" class="c"/>
<text fill="#2e2e2e" stroke="none" x="673.4" y="595.4" font-size="3.66" text-anchor="end">R101</text>
<text fill="#2e2e2e" stroke="none" x="690.4" y="595.4" font-size="3.66">5.1R</text>
<text fill="#2e2e2e" stroke="none" x="673.4" y="601.8" font-size="3.66" text-anchor="end">R102</text>
<text fill="#2e2e2e" stroke="none" x="690.4" y="601.8" font-size="3.66">5.1R</text>
<path d="M619 609.1L627 609.1" class="c"/>
<path d="M619 615.4L761.4 615.4" class="c"/>
<circle cx="763.4" cy="615.4" r="2" fill="#fff"/>
<text fill="#2e2e2e" stroke="none" x="768" y="616.6" font-size="3.66">VBUS</text>
<circle cx="639.6" cy="615.4" r="1.15" fill="#111" stroke="none"/>
<circle cx="679.1" cy="571.3" r="15.9" stroke-width="0.8"/>
<rect x="673.2" y="565.5" width="12.2" height="11.7" stroke-width="0.8" class="c"/>
<rect x="676.4" y="570.2" width="6.2" height="2.8" fill="#333" stroke-width="0" class="c"/>
<text fill="#2e2e2e" stroke="none" x="679.2" y="564.2" font-size="3.66" text-anchor="middle">F101</text>
<text fill="#2e2e2e" stroke="none" x="671.6" y="568.6" font-size="3.17" text-anchor="end">1</text>
<text fill="#2e2e2e" stroke="none" x="671.6" y="573" font-size="3.17" text-anchor="end">2</text>
<text fill="#2e2e2e" stroke="none" x="687" y="568.6" font-size="3.17">4</text>
<text fill="#2e2e2e" stroke="none" x="687" y="573" font-size="3.17">3</text>
<path d="M658.1 569.2L673.2 569.2" class="c"/>
<path d="M685.4 569.2L710.3 569.2L710.3 649.4" class="c"/>
<path d="M651.8 573.4L673.2 573.4" class="c"/>
<path d="M685.4 573.4L700.5 573.4L700.5 649.4" class="c"/>
<circle cx="710.3" cy="596.5" r="1.15" fill="#111" stroke="none"/>
<circle cx="700.5" cy="602.8" r="1.15" fill="#111" stroke="none"/>
<path d="M756 581.9L761.6 581.9L764.6 583.9L761.6 585.9L756 585.9Z" stroke="#555" stroke-width="0.7" fill="#fff"/>
<text fill="#2e2e2e" stroke="none" x="767.6" y="585" font-size="3.66">USB_CC2</text>
<text fill="#2e2e2e" stroke="none" x="799" y="584.7" font-size="3.66" text-anchor="middle">[1]</text>
<path d="M756 588.2L761.6 588.2L764.6 590.2L761.6 592.2L756 592.2Z" stroke="#555" stroke-width="0.7" fill="#fff"/>
<text fill="#2e2e2e" stroke="none" x="767.6" y="591.3" font-size="3.66">USB_CC1</text>
<text fill="#2e2e2e" stroke="none" x="799" y="591" font-size="3.66" text-anchor="middle">[1]</text>
<path d="M756 594.5L761.6 594.5L764.6 596.5L761.6 598.5L756 598.5Z" stroke="#555" stroke-width="0.7" fill="#fff"/>
<text fill="#2e2e2e" stroke="none" x="767.6" y="597.6" font-size="3.66">USB_DP_IO</text>
<text fill="#2e2e2e" stroke="none" x="799" y="597.3" font-size="3.66" text-anchor="middle">[1]</text>
<path d="M756 600.8L761.6 600.8L764.6 602.8L761.6 604.8L756 604.8Z" stroke="#555" stroke-width="0.7" fill="#fff"/>
<text fill="#2e2e2e" stroke="none" x="767.6" y="603.9" font-size="3.66">USB_DM_IO</text>
<text fill="#2e2e2e" stroke="none" x="799" y="603.6" font-size="3.66" text-anchor="middle">[1]</text>
<circle cx="736.1" cy="583.9" r="1.15" fill="#111" stroke="none"/>
<circle cx="725.7" cy="590.2" r="1.15" fill="#111" stroke="none"/>
<circle cx="645.5" cy="615.4" r="1.15" fill="#111" stroke="none"/>
<path d="M645.5 615.4L645.5 649.4" class="c"/>
<rect x="642.2" y="625.9" width="6.6" height="8.4" fill="#fff" stroke="#444" stroke-width="0.8" class="c"/>
<path d="M643.3 626.9L647.7 626.9L645.5 630.1Z" stroke-width="0.3" fill="#111"/>
<path d="M643.3 633.3L647.7 633.3L645.5 630.1Z" stroke-width="0.3" fill="#111"/>
<path d="M642.9 630.1L648.1 630.1" stroke="#111" stroke-width="0.9" class="c"/>
<path d="M641.9 649.4L649.1 649.4" stroke="#8a8a8a" stroke-width="0.8" class="c"/>
<path d="M643.3 651.5L647.7 651.5" stroke="#8a8a8a" stroke-width="0.7" class="c"/>
<path d="M644.6 653.6L646.4 653.6" stroke="#8a8a8a" stroke-width="0.7" class="c"/>
<text fill="#2e2e2e" stroke="none" x="646.4" y="623.6" font-size="3.66">D101</text>
<text fill="#2e2e2e" stroke="none" x="650.4" y="630.6" font-size="3.66">24V</text>
<circle cx="662.7" cy="615.4" r="1.15" fill="#111" stroke="none"/>
<path d="M662.7 615.4L662.7 649.4" class="c"/>
<path d="M659.1 627.5L666.3 627.5" stroke="#777" stroke-width="0.8" class="c"/>
<path d="M659.1 630.5L666.3 630.5" stroke="#777" stroke-width="0.8" class="c"/>
<path d="M662.7 627.8V630.2" stroke="#fff" stroke-width="1.6"/>
<path d="M659.1 649.4L666.3 649.4" stroke="#8a8a8a" stroke-width="0.8" class="c"/>
<path d="M660.5 651.5L664.9 651.5" stroke="#8a8a8a" stroke-width="0.7" class="c"/>
<path d="M661.8 653.6L663.6 653.6" stroke="#8a8a8a" stroke-width="0.7" class="c"/>
<text fill="#2e2e2e" stroke="none" x="663.3" y="624.4" font-size="3.66">C101</text>
<text fill="#2e2e2e" stroke="none" x="664.5" y="634" font-size="3.66">NC</text>
<circle cx="672.8" cy="615.4" r="1.15" fill="#111" stroke="none"/>
<path d="M672.8 615.4L672.8 649.4" class="c"/>
<path d="M669.2 627.5L676.4 627.5" stroke="#777" stroke-width="0.8" class="c"/>
<path d="M669.2 630.5L676.4 630.5" stroke="#777" stroke-width="0.8" class="c"/>
<path d="M672.8 627.8V630.2" stroke="#fff" stroke-width="1.6"/>
<path d="M669.2 649.4L676.4 649.4" stroke="#8a8a8a" stroke-width="0.8" class="c"/>
<path d="M670.6 651.5L675 651.5" stroke="#8a8a8a" stroke-width="0.7" class="c"/>
<path d="M671.9 653.6L673.7 653.6" stroke="#8a8a8a" stroke-width="0.7" class="c"/>
<text fill="#2e2e2e" stroke="none" x="673.4" y="624.4" font-size="3.66">C111</text>
<text fill="#2e2e2e" stroke="none" x="674.6" y="634" font-size="3.66">1uF</text>
<rect x="697.2" y="625.9" width="6.6" height="8.4" fill="#fff" stroke="#444" stroke-width="0.8" class="c"/>
<path d="M698.3 626.9L702.7 626.9L700.5 630.1Z" stroke-width="0.3" fill="#111"/>
<path d="M698.3 633.3L702.7 633.3L700.5 630.1Z" stroke-width="0.3" fill="#111"/>
<path d="M697.9 630.1L703.1 630.1" stroke="#111" stroke-width="0.9" class="c"/>
<path d="M696.9 649.4L704.1 649.4" stroke="#8a8a8a" stroke-width="0.8" class="c"/>
<path d="M698.3 651.5L702.7 651.5" stroke="#8a8a8a" stroke-width="0.7" class="c"/>
<path d="M699.6 653.6L701.4 653.6" stroke="#8a8a8a" stroke-width="0.7" class="c"/>
<rect x="707" y="625.9" width="6.6" height="8.4" fill="#fff" stroke="#444" stroke-width="0.8" class="c"/>
<path d="M708.1 626.9L712.5 626.9L710.3 630.1Z" stroke-width="0.3" fill="#111"/>
<path d="M708.1 633.3L712.5 633.3L710.3 630.1Z" stroke-width="0.3" fill="#111"/>
<path d="M707.7 630.1L712.9 630.1" stroke="#111" stroke-width="0.9" class="c"/>
<path d="M706.7 649.4L713.9 649.4" stroke="#8a8a8a" stroke-width="0.8" class="c"/>
<path d="M708.1 651.5L712.5 651.5" stroke="#8a8a8a" stroke-width="0.7" class="c"/>
<path d="M709.4 653.6L711.2 653.6" stroke="#8a8a8a" stroke-width="0.7" class="c"/>
<text fill="#2e2e2e" stroke="none" x="700" y="620" font-size="3.66" text-anchor="middle">T101</text>
<text fill="#2e2e2e" stroke="none" x="711.4" y="620.4" font-size="3.66" text-anchor="middle">T110</text>
<path d="M725.7 590.2L725.7 649.4" class="c"/>
<path d="M736.1 583.9L736.1 649.4" class="c"/>
<rect x="721.5" y="619.2" width="27.2" height="15.1" stroke="#555" stroke-width="0.7" stroke-dasharray="2 1.6" class="c"/>
<rect x="722.4" y="623.8" width="6.6" height="8.4" fill="#fff" stroke="#444" stroke-width="0.8" class="c"/>
<path d="M723.5 624.8L727.9 624.8L725.7 628Z" stroke-width="0.3" fill="#111"/>
<path d="M723.5 631.2L727.9 631.2L725.7 628Z" stroke-width="0.3" fill="#111"/>
<path d="M723.1 628L728.3 628" stroke="#111" stroke-width="0.9" class="c"/>
<rect x="732.8" y="623.8" width="6.6" height="8.4" fill="#fff" stroke="#444" stroke-width="0.8" class="c"/>
<path d="M733.9 624.8L738.3 624.8L736.1 628Z" stroke-width="0.3" fill="#111"/>
<path d="M733.9 631.2L738.3 631.2L736.1 628Z" stroke-width="0.3" fill="#111"/>
<path d="M733.5 628L738.7 628" stroke="#111" stroke-width="0.9" class="c"/>
<path d="M722.1 649.4L729.3 649.4" stroke="#8a8a8a" stroke-width="0.8" class="c"/>
<path d="M723.5 651.5L727.9 651.5" stroke="#8a8a8a" stroke-width="0.7" class="c"/>
<path d="M724.8 653.6L726.6 653.6" stroke="#8a8a8a" stroke-width="0.7" class="c"/>
<path d="M732.5 649.4L739.7 649.4" stroke="#8a8a8a" stroke-width="0.8" class="c"/>
<path d="M733.9 651.5L738.3 651.5" stroke="#8a8a8a" stroke-width="0.7" class="c"/>
<path d="M735.2 653.6L737 653.6" stroke="#8a8a8a" stroke-width="0.7" class="c"/>
<text fill="#2e2e2e" stroke="none" x="725" y="618.4" font-size="3.66" text-anchor="middle">T105</text>
<text fill="#2e2e2e" stroke="none" x="737" y="618.4" font-size="3.66" text-anchor="middle">T106</text>
<text fill="#2e2e2e" stroke="none" x="741" y="629.6" font-size="3.66">10V</text>
<text fill="#2e2e2e" stroke="none" x="519.6" y="730" font-size="3.66" text-anchor="end">VIBR_PMU</text>
<circle cx="523.9" cy="728.9" r="2" fill="#fff"/>
<path d="M525.9 728.9L571.5 728.9" class="c"/>
<path d="M571.5 728.9a2.2 2 0 0 1 4.5 0a2.2 2 0 0 1 4.5 0a2.2 2 0 0 1 4.5 0" stroke-width=".8"/>
<path d="M584.9 728.9L611.7 728.9" class="c"/>
<text fill="#2e2e2e" stroke="none" x="570.6" y="727.8" font-size="3.66" text-anchor="end">R100</text>
<text fill="#2e2e2e" stroke="none" x="585.8" y="727.8" font-size="3.66">0R</text>
<circle cx="559.4" cy="728.9" r="1.15" fill="#111" stroke="none"/>
<circle cx="595.4" cy="728.9" r="1.15" fill="#111" stroke="none"/>
<rect x="611.4" y="727.2" width="3.6" height="3.4" fill="#111" stroke-width="0" class="c"/>
<text fill="#2e2e2e" stroke="none" x="619.4" y="733" font-size="3.66" transform="rotate(-90 619.4 733)">VIB+</text>
<path d="M616.2 726.6L616.2 731.2" stroke="#777" stroke-width="0.5" class="c"/>
<path d="M559.4 728.9L559.4 762.3L611.7 762.3" class="c"/>
<path d="M555.8 743.7L563 743.7" stroke="#777" stroke-width="0.8" class="c"/>
<path d="M555.8 747L563 747" stroke="#777" stroke-width="0.8" class="c"/>
<path d="M559.4 744V746.7" stroke="#fff" stroke-width="1.6"/>
<path d="M595.4 728.9L595.4 779" class="c"/>
<path d="M591.8 743.7L599 743.7" stroke="#777" stroke-width="0.8" class="c"/>
<path d="M591.8 747L599 747" stroke="#777" stroke-width="0.8" class="c"/>
<path d="M595.4 744V746.7" stroke="#fff" stroke-width="1.6"/>
<text fill="#2e2e2e" stroke="none" x="557" y="741.4" font-size="3.66" text-anchor="end">C112</text>
<text fill="#2e2e2e" stroke="none" x="557" y="752.4" font-size="3.66" text-anchor="end">1uF</text>
<text fill="#2e2e2e" stroke="none" x="597.4" y="741.4" font-size="3.66">C118</text>
<text fill="#2e2e2e" stroke="none" x="597.4" y="751.6" font-size="3.66">33pF</text>
<circle cx="595.4" cy="762.3" r="1.15" fill="#111" stroke="none"/>
<rect x="611.4" y="760.6" width="3.6" height="3.4" fill="#111" stroke-width="0" class="c"/>
<text fill="#2e2e2e" stroke="none" x="619.4" y="766" font-size="3.66" transform="rotate(-90 619.4 766)">VIB-</text>
<path d="M616.2 760L616.2 764.6" stroke="#777" stroke-width="0.5" class="c"/>
<path d="M595.4 779L593.3 780.1L597.5 782.5L593.3 784.8L597.5 787L593.3 789.3L597.5 791.6L595.4 792.8" stroke-width="0.8"/>
<path d="M595.4 792.8L595.4 806.2" class="c"/>
<path d="M591.8 806.2L599 806.2" stroke="#8a8a8a" stroke-width="0.8" class="c"/>
<path d="M593.2 808.3L597.6 808.3" stroke="#8a8a8a" stroke-width="0.7" class="c"/>
<path d="M594.5 810.4L596.3 810.4" stroke="#8a8a8a" stroke-width="0.7" class="c"/>
<text fill="#2e2e2e" stroke="none" x="598.6" y="782.6" font-size="3.66">R105</text>
<text fill="#2e2e2e" stroke="none" x="600" y="789.6" font-size="3.66">0R</text>
<text fill="#2e2e2e" stroke="none" x="673.4" y="757" font-size="3.66" text-anchor="middle">[1]</text>
<text fill="#2e2e2e" stroke="none" x="673.4" y="765.4" font-size="3.66" text-anchor="middle">[1]</text>
<text fill="#2e2e2e" stroke="none" x="711" y="757.4" font-size="3.66" text-anchor="end">CHG_TSBUS</text>
<text fill="#2e2e2e" stroke="none" x="711" y="765.8" font-size="3.66" text-anchor="end">AVSS30_AUD</text>
<path d="M712.6 754L718.8 754L721 756.2L718.8 758.4L712.6 758.4Z" stroke="#7a7a7a" stroke-width="0.7"/>
<path d="M712.6 762.5L718.8 762.5L721 764.7L718.8 766.9L712.6 766.9Z" stroke="#7a7a7a" stroke-width="0.7"/>
<path d="M721 756.2L771.3 756.2L771.3 739.7L807.7 739.7L807.7 756" class="c"/>
<path d="M721 764.7L771.3 764.7L771.3 781L784.7 781L784.7 739.7" class="c"/>
<circle cx="784.7" cy="739.7" r="1.15" fill="#111" stroke="none"/>
<path d="M781 754.6L788.6 758L781 761.4L788.6 764.8L781 768.2" stroke-width="0.8"/>
<path d="M778.6 769.6L790.6 753.6" stroke-width="0.7"/>
<path d="M778.6 752.4L780.4 752.4" stroke-width="0.6" class="c"/>
<text fill="#2e2e2e" stroke="none" x="789.4" y="756.8" font-size="3.66">NTC101</text>
<text fill="#2e2e2e" stroke="none" x="792" y="763.6" font-size="3.66">100K</text>
<path d="M804.1 756L811.3 756" stroke="#777" stroke-width="0.8" class="c"/>
<path d="M804.1 760.4L811.3 760.4" stroke="#777" stroke-width="0.8" class="c"/>
<path d="M807.7 760.4L807.7 777.2" class="c"/>
<path d="M804.1 777.2L811.3 777.2" stroke="#8a8a8a" stroke-width="0.8" class="c"/>
<path d="M805.5 779.3L809.9 779.3" stroke="#8a8a8a" stroke-width="0.7" class="c"/>
<path d="M806.8 781.4L808.6 781.4" stroke="#8a8a8a" stroke-width="0.7" class="c"/>
<text fill="#2e2e2e" stroke="none" x="809.4" y="755" font-size="3.66">C102</text>
<text fill="#2e2e2e" stroke="none" x="810.6" y="765.6" font-size="3.66">NC</text>
<circle cx="776" cy="838.2" r="10.85" stroke-width="0.8"/>
<circle cx="776" cy="838.2" r="8.1" stroke-width="0.7"/>
<circle cx="776" cy="838.6" r="5.4" stroke-width="0.7"/>
<text fill="#2e2e2e" stroke="none" x="776" y="825.6" font-size="3.66" text-anchor="middle">WBL101</text>
<text fill="#2e2e2e" stroke="none" x="811.6" y="836.8" font-size="3.66" text-anchor="middle">MARK101</text>
<text fill="#2e2e2e" stroke="none" x="776" y="834.4" font-size="3.17" text-anchor="middle">AD-01</text>
<text fill="#2e2e2e" stroke="none" x="849.8" y="647.4" font-size="3.66" text-anchor="middle">[1]</text>
<text fill="#2e2e2e" stroke="none" x="883.4" y="648.2" font-size="3.66" text-anchor="end">MICP0</text>
<path d="M894 644.8L887.9 644.8L885.7 647L887.9 649.2L894 649.2Z" stroke="#7a7a7a" stroke-width="0.7"/>
<path d="M894 647L912.7 647" class="c"/>
<path d="M912.7 647L914 644.9L916.6 649.1L919.1 644.9L921.7 649.1L924.2 644.9L926.8 649.1L928.1 647" stroke-width="0.8"/>
<text fill="#2e2e2e" stroke="none" x="912" y="645.8" font-size="3.66" text-anchor="end">R103</text>
<text fill="#2e2e2e" stroke="none" x="929" y="645.8" font-size="3.66">100R</text>
<text fill="#2e2e2e" stroke="none" x="849.8" y="672.8" font-size="3.66" text-anchor="middle">[1]</text>
<text fill="#2e2e2e" stroke="none" x="883.4" y="673.6" font-size="3.66" text-anchor="end">MICN0</text>
<path d="M894 670.2L887.9 670.2L885.7 672.4L887.9 674.6L894 674.6Z" stroke="#7a7a7a" stroke-width="0.7"/>
<path d="M894 672.4L912.7 672.4" class="c"/>
<path d="M912.7 672.4L914 670.3L916.6 674.5L919.1 670.3L921.7 674.5L924.2 670.3L926.8 674.5L928.1 672.4" stroke-width="0.8"/>
<text fill="#2e2e2e" stroke="none" x="912" y="671.2" font-size="3.66" text-anchor="end">R104</text>
<text fill="#2e2e2e" stroke="none" x="929" y="671.2" font-size="3.66">100R</text>
<path d="M928.1 647L1008.4 647" class="c"/>
<path d="M928.1 672.4L1055.4 672.4" class="c"/>
<circle cx="958.4" cy="647" r="1.15" fill="#111" stroke="none"/>
<circle cx="958.4" cy="672.4" r="1.15" fill="#111" stroke="none"/>
<path d="M958.4 647L958.4 672.4" class="c"/>
<path d="M954.8 657.5L962 657.5" stroke="#777" stroke-width="0.8" class="c"/>
<path d="M954.8 661.2L962 661.2" stroke="#777" stroke-width="0.8" class="c"/>
<path d="M958.4 657.8V660.9" stroke="#fff" stroke-width="1.6"/>
<text fill="#2e2e2e" stroke="none" x="955" y="655.6" font-size="3.66" text-anchor="end">C109</text>
<text fill="#2e2e2e" stroke="none" x="955" y="666.4" font-size="3.66" text-anchor="end">33pF</text>
<circle cx="973.3" cy="647" r="1.15" fill="#111" stroke="none"/>
<path d="M973.3 647L973.3 707.3" class="c"/>
<rect x="970" y="684.6" width="6.6" height="8.9" fill="#fff" stroke="#444" stroke-width="0.8" class="c"/>
<path d="M971.1 685.6L975.5 685.6L973.3 689Z" stroke-width="0.3" fill="#111"/>
<path d="M971.1 692.5L975.5 692.5L973.3 689Z" stroke-width="0.3" fill="#111"/>
<path d="M970.7 689L975.9 689" stroke="#111" stroke-width="0.9" class="c"/>
<path d="M969.7 707.3L976.9 707.3" stroke="#8a8a8a" stroke-width="0.8" class="c"/>
<path d="M971.1 709.4L975.5 709.4" stroke="#8a8a8a" stroke-width="0.7" class="c"/>
<path d="M972.4 711.5L974.2 711.5" stroke="#8a8a8a" stroke-width="0.7" class="c"/>
<text fill="#2e2e2e" stroke="none" x="970.6" y="683" font-size="3.66" text-anchor="end">T101</text>
<rect x="1008.4" y="634.4" width="23.9" height="25" stroke-width="0.9" class="c"/>
<text fill="#2e2e2e" stroke="none" x="1003.6" y="633" font-size="3.66">MIC101</text>
<text fill="#2e2e2e" stroke="none" x="1010" y="639.4" font-size="3.42">VDD</text>
<text fill="#2e2e2e" stroke="none" x="1010" y="648.2" font-size="3.42">OUT</text>
<text fill="#2e2e2e" stroke="none" x="1010" y="654.6" font-size="3.42">GND</text>
<text fill="#2e2e2e" stroke="none" x="1007" y="637.4" font-size="3.17" text-anchor="end">1</text>
<text fill="#2e2e2e" stroke="none" x="1007" y="646.2" font-size="3.17" text-anchor="end">2</text>
<text fill="#2e2e2e" stroke="none" x="1007" y="654.4" font-size="3.17" text-anchor="end">4</text>
<circle cx="1025.8" cy="647" r="3.9" fill="#fff" stroke-width="0.9"/>
<path d="M1017 646.2L1022 646.2" stroke-width="0.6" class="c"/>
<path d="M1017 647.8L1022 647.8" stroke-width="0.6" class="c"/>
<path d="M1008.4 638.1L994.2 638.1L994.2 621.7L1038.4 621.7" class="c"/>
<circle cx="1038.4" cy="609.2" r="2" fill="#fff"/>
<path d="M1038.4 611.2L1038.4 672.4" class="c"/>
<circle cx="1038.4" cy="621.7" r="1.15" fill="#111" stroke="none"/>
<circle cx="1038.4" cy="672.4" r="1.15" fill="#111" stroke="none"/>
<path d="M1034.8 642.4L1042 642.4" stroke="#777" stroke-width="0.8" class="c"/>
<path d="M1034.8 647L1042 647" stroke="#777" stroke-width="0.8" class="c"/>
<path d="M1038.4 642.8V646.6" stroke="#fff" stroke-width="1.6"/>
<text fill="#2e2e2e" stroke="none" x="1038.6" y="603" font-size="3.66" text-anchor="middle">MICBIAS0</text>
<text fill="#2e2e2e" stroke="none" x="1040.4" y="642" font-size="3.66">C110</text>
<text fill="#2e2e2e" stroke="none" x="1040.4" y="651.6" font-size="3.66">1uF</text>
<path d="M1008.4 655.3L994.2 655.3L994.2 672.4" class="c"/>
<circle cx="994.2" cy="672.4" r="1.15" fill="#111" stroke="none"/>
<path d="M1021.2 659.4L1021.2 667.7" class="c"/>
<text fill="#2e2e2e" stroke="none" x="1022.6" y="664" font-size="3.17">3</text>
<text fill="#2e2e2e" stroke="none" x="1020.4" y="657.4" font-size="3.17" transform="rotate(-90 1020.4 657.4)">5</text>
<path d="M1055.4 670.4L1061 670.4L1063.8 672.4L1061 674.4L1055.4 674.4Z" stroke="#555" stroke-width="0.7"/>
<text fill="#2e2e2e" stroke="none" x="1066" y="673.6" font-size="3.66">AVSS30_AUD</text>
<text fill="#2e2e2e" stroke="none" x="1096" y="673" font-size="3.66" text-anchor="middle">[1]</text>
<text fill="#2e2e2e" stroke="none" x="992" y="679" font-size="3.66">MIC-6PIN-MSM381A2718Z9D8GE-4H.9</text>
<text fill="#2e2e2e" stroke="none" x="1177.6" y="628.8" font-size="3.66" text-anchor="middle">[1]</text>
<text fill="#2e2e2e" stroke="none" x="1204.4" y="629.5" font-size="3.66" text-anchor="end">SPKP</text>
<path d="M1206.2 626L1212.3 626L1214.5 628.2L1212.3 630.4L1206.2 630.4Z" stroke="#7a7a7a" stroke-width="0.7"/>
<path d="M1214.5 628.2L1231.6 628.2" stroke="#777" class="c"/>
<path d="M1231.6 628.2a2.1 1.9 0 0 1 4.1 0a2.1 1.9 0 0 1 4.1 0a2.1 1.9 0 0 1 4.1 0" stroke-width=".8"/>
<path d="M1244 628.2L1315 628.2" class="c"/>
<text fill="#2e2e2e" stroke="none" x="1231" y="627.4" font-size="3.66" text-anchor="end">R106</text>
<text fill="#2e2e2e" stroke="none" x="1270" y="627.4" font-size="3.66" text-anchor="middle">0.20mm</text>
<rect x="1315" y="626.5" width="4" height="3.4" fill="#111" stroke-width="0" class="c"/>
<path d="M1320.4 626L1320.4 630.4" stroke="#777" stroke-width="0.5" class="c"/>
<text fill="#2e2e2e" stroke="none" x="1177.6" y="643.3" font-size="3.66" text-anchor="middle">[1]</text>
<text fill="#2e2e2e" stroke="none" x="1204.4" y="644" font-size="3.66" text-anchor="end">SPKN</text>
<path d="M1206.2 640.5L1212.3 640.5L1214.5 642.7L1212.3 644.9L1206.2 644.9Z" stroke="#7a7a7a" stroke-width="0.7"/>
<path d="M1214.5 642.7L1231.6 642.7" stroke="#777" class="c"/>
<path d="M1231.6 642.7a2.1 1.9 0 0 1 4.1 0a2.1 1.9 0 0 1 4.1 0a2.1 1.9 0 0 1 4.1 0" stroke-width=".8"/>
<path d="M1244 642.7L1315 642.7" class="c"/>
<text fill="#2e2e2e" stroke="none" x="1231" y="641.9" font-size="3.66" text-anchor="end">R107</text>
<text fill="#2e2e2e" stroke="none" x="1270" y="641.9" font-size="3.66" text-anchor="middle">0.20mm</text>
<rect x="1315" y="641" width="4" height="3.4" fill="#111" stroke-width="0" class="c"/>
<path d="M1320.4 640.5L1320.4 644.9" stroke="#777" stroke-width="0.5" class="c"/>
<text fill="#2e2e2e" stroke="none" x="1322" y="629.4" font-size="3.66">SPK+</text>
<text fill="#2e2e2e" stroke="none" x="1322" y="643.9" font-size="3.66">SPK-</text>
<circle cx="1254.3" cy="628.2" r="1.15" fill="#111" stroke="none"/>
<circle cx="1290.3" cy="628.2" r="1.15" fill="#111" stroke="none"/>
<circle cx="1267.4" cy="642.7" r="1.15" fill="#111" stroke="none"/>
<circle cx="1302.9" cy="642.7" r="1.15" fill="#111" stroke="none"/>
<path d="M1254.3 628.2L1254.3 678.4" class="c"/>
<path d="M1250.3 655.8L1258.3 655.8" stroke="#777" stroke-width="0.8" class="c"/>
<path d="M1250.3 659.4L1258.3 659.4" stroke="#777" stroke-width="0.8" class="c"/>
<path d="M1254.3 656.2V659" stroke="#fff" stroke-width="1.6"/>
<path d="M1250.7 678.4L1257.9 678.4" stroke="#8a8a8a" stroke-width="0.8" class="c"/>
<path d="M1252.1 680.5L1256.5 680.5" stroke="#8a8a8a" stroke-width="0.7" class="c"/>
<path d="M1253.4 682.6L1255.2 682.6" stroke="#8a8a8a" stroke-width="0.7" class="c"/>
<text fill="#2e2e2e" stroke="none" x="1253.3" y="654" font-size="3.66" text-anchor="end">C120</text>
<text fill="#2e2e2e" stroke="none" x="1252.7" y="664.4" font-size="3.66" text-anchor="end">33pF</text>
<path d="M1267.4 642.7L1267.4 678.4" class="c"/>
<path d="M1263.4 655.8L1271.4 655.8" stroke="#777" stroke-width="0.8" class="c"/>
<path d="M1263.4 659.4L1271.4 659.4" stroke="#777" stroke-width="0.8" class="c"/>
<path d="M1267.4 656.2V659" stroke="#fff" stroke-width="1.6"/>
<path d="M1263.8 678.4L1271 678.4" stroke="#8a8a8a" stroke-width="0.8" class="c"/>
<path d="M1265.2 680.5L1269.6 680.5" stroke="#8a8a8a" stroke-width="0.7" class="c"/>
<path d="M1266.5 682.6L1268.3 682.6" stroke="#8a8a8a" stroke-width="0.7" class="c"/>
<text fill="#2e2e2e" stroke="none" x="1266.4" y="654" font-size="3.66" text-anchor="end">C121</text>
<text fill="#2e2e2e" stroke="none" x="1265.8" y="664.4" font-size="3.66" text-anchor="end">33pF</text>
<rect x="1288" y="649.2" width="25.6" height="19.1" stroke="#555" stroke-width="0.7" stroke-dasharray="2 1.6" class="c"/>
<path d="M1290.3 628.2L1290.3 678.4" class="c"/>
<rect x="1287" y="655.8" width="6.6" height="8.5" fill="#fff" stroke="#444" stroke-width="0.8" class="c"/>
<path d="M1288.1 656.8L1292.5 656.8L1290.3 660Z" stroke-width="0.3" fill="#111"/>
<path d="M1288.1 663.3L1292.5 663.3L1290.3 660Z" stroke-width="0.3" fill="#111"/>
<path d="M1287.7 660L1292.9 660" stroke="#111" stroke-width="0.9" class="c"/>
<path d="M1286.7 678.4L1293.9 678.4" stroke="#8a8a8a" stroke-width="0.8" class="c"/>
<path d="M1288.1 680.5L1292.5 680.5" stroke="#8a8a8a" stroke-width="0.7" class="c"/>
<path d="M1289.4 682.6L1291.2 682.6" stroke="#8a8a8a" stroke-width="0.7" class="c"/>
<text fill="#2e2e2e" stroke="none" x="1295.3" y="654" font-size="3.66" text-anchor="middle">T103</text>
<path d="M1302.9 642.7L1302.9 678.4" class="c"/>
<rect x="1299.6" y="655.8" width="6.6" height="8.5" fill="#fff" stroke="#444" stroke-width="0.8" class="c"/>
<path d="M1300.7 656.8L1305.1 656.8L1302.9 660Z" stroke-width="0.3" fill="#111"/>
<path d="M1300.7 663.3L1305.1 663.3L1302.9 660Z" stroke-width="0.3" fill="#111"/>
<path d="M1300.3 660L1305.5 660" stroke="#111" stroke-width="0.9" class="c"/>
<path d="M1299.3 678.4L1306.5 678.4" stroke="#8a8a8a" stroke-width="0.8" class="c"/>
<path d="M1300.7 680.5L1305.1 680.5" stroke="#8a8a8a" stroke-width="0.7" class="c"/>
<path d="M1302 682.6L1303.8 682.6" stroke="#8a8a8a" stroke-width="0.7" class="c"/>
<text fill="#2e2e2e" stroke="none" x="1307.9" y="654" font-size="3.66" text-anchor="middle">T104</text>
<text fill="#2e2e2e" stroke="none" x="1308" y="662" font-size="3.66">7V</text>
<path d="M828.7 791.8L1467 791.8" stroke="#5a5a5a" stroke-width="1.3" class="c"/>
<path d="M828.7 791.8L828.7 838" stroke="#5a5a5a" stroke-width="1.1" class="c"/>
<path d="M828.7 821.4L1467 821.4" stroke="#5a5a5a" stroke-width="1.1" class="c"/>
<path d="M1059.2 791.8L1059.2 838" stroke="#5a5a5a" stroke-width="1.1" class="c"/>
<path d="M1252.4 791.8L1252.4 838" stroke="#5a5a5a" stroke-width="1.1" class="c"/>
<path d="M897.5 821.4L897.5 838" stroke="#5a5a5a" stroke-width="1.1" class="c"/>
<path d="M969.4 821.4L969.4 838" stroke="#5a5a5a" stroke-width="1.1" class="c"/>
<path d="M1003.9 821.4L1003.9 838" stroke="#5a5a5a" stroke-width="1.1" class="c"/>
<path d="M1344.6 821.4L1344.6 838" stroke="#5a5a5a" stroke-width="1.1" class="c"/>
<text stroke="none" x="833" y="810.7" font-size="10.4" fill="#111" textLength="150" lengthAdjust="spacingAndGlyphs">COMPANY: TRANSSION HOLDINGS</text>
<text stroke="none" x="1063.5" y="808.8" font-size="10.4" fill="#111" textLength="33.5" lengthAdjust="spacingAndGlyphs">MODEL:</text>
<text stroke="none" x="1138" y="809.4" font-size="10.8" fill="#111" textLength="23" lengthAdjust="spacingAndGlyphs">H854</text>
<text stroke="none" x="1257" y="810.7" font-size="10.6" fill="#111" textLength="62" lengthAdjust="spacingAndGlyphs">Modified Date:</text>
<text stroke="none" x="1343.8" y="810" font-size="10.8" fill="#111" textLength="40.2" lengthAdjust="spacingAndGlyphs">2021/1/6</text>
<text stroke="none" x="833" y="833.9" font-size="10.4" fill="#111" textLength="34.3" lengthAdjust="spacingAndGlyphs">DRAWN</text>
<text stroke="none" x="916.5" y="833.4" font-size="10.4" fill="#111" textLength="33.1" lengthAdjust="spacingAndGlyphs">ZY/DLA</text>
<text stroke="none" x="971.3" y="834.2" font-size="10.4" fill="#111" textLength="30.7" lengthAdjust="spacingAndGlyphs">DATED</text>
<text stroke="none" x="1008" y="833" font-size="10.8" fill="#111" textLength="43.7" lengthAdjust="spacingAndGlyphs">20180613</text>
<text stroke="none" x="1063.5" y="833.9" font-size="10.4" fill="#111" textLength="27.9" lengthAdjust="spacingAndGlyphs">TITLE:</text>
<text stroke="none" x="1110.3" y="833.9" font-size="10.4" fill="#111" textLength="46.6" lengthAdjust="spacingAndGlyphs">1_SUB_AU</text>
<text stroke="none" x="1257" y="842.4" font-size="10.4" fill="#111" textLength="42.6" lengthAdjust="spacingAndGlyphs">VERSION:</text>
<text stroke="none" x="1307.7" y="842.4" font-size="10.4" fill="#111" textLength="19.6" lengthAdjust="spacingAndGlyphs">V1.0</text>
<text stroke="none" x="1347.4" y="842.4" font-size="10.4" fill="#111" textLength="27.2" lengthAdjust="spacingAndGlyphs">SHEET</text>
<text stroke="none" x="1385.6" y="842.4" font-size="10.4" fill="#111" textLength="4.4" lengthAdjust="spacingAndGlyphs">1</text>
<text stroke="none" x="1401.8" y="842.4" font-size="10.4" fill="#111" textLength="10.6" lengthAdjust="spacingAndGlyphs">OF</text>
<text stroke="none" x="1431.3" y="842.4" font-size="10.4" fill="#111" textLength="4.8" lengthAdjust="spacingAndGlyphs">2</text>
</svg></div>
</div>

<!-- STATUS BAR -->
<div id="status" class="abs">XZZ Schematics https://www.xzztools.com</div>

</div>
</body>
</html>
